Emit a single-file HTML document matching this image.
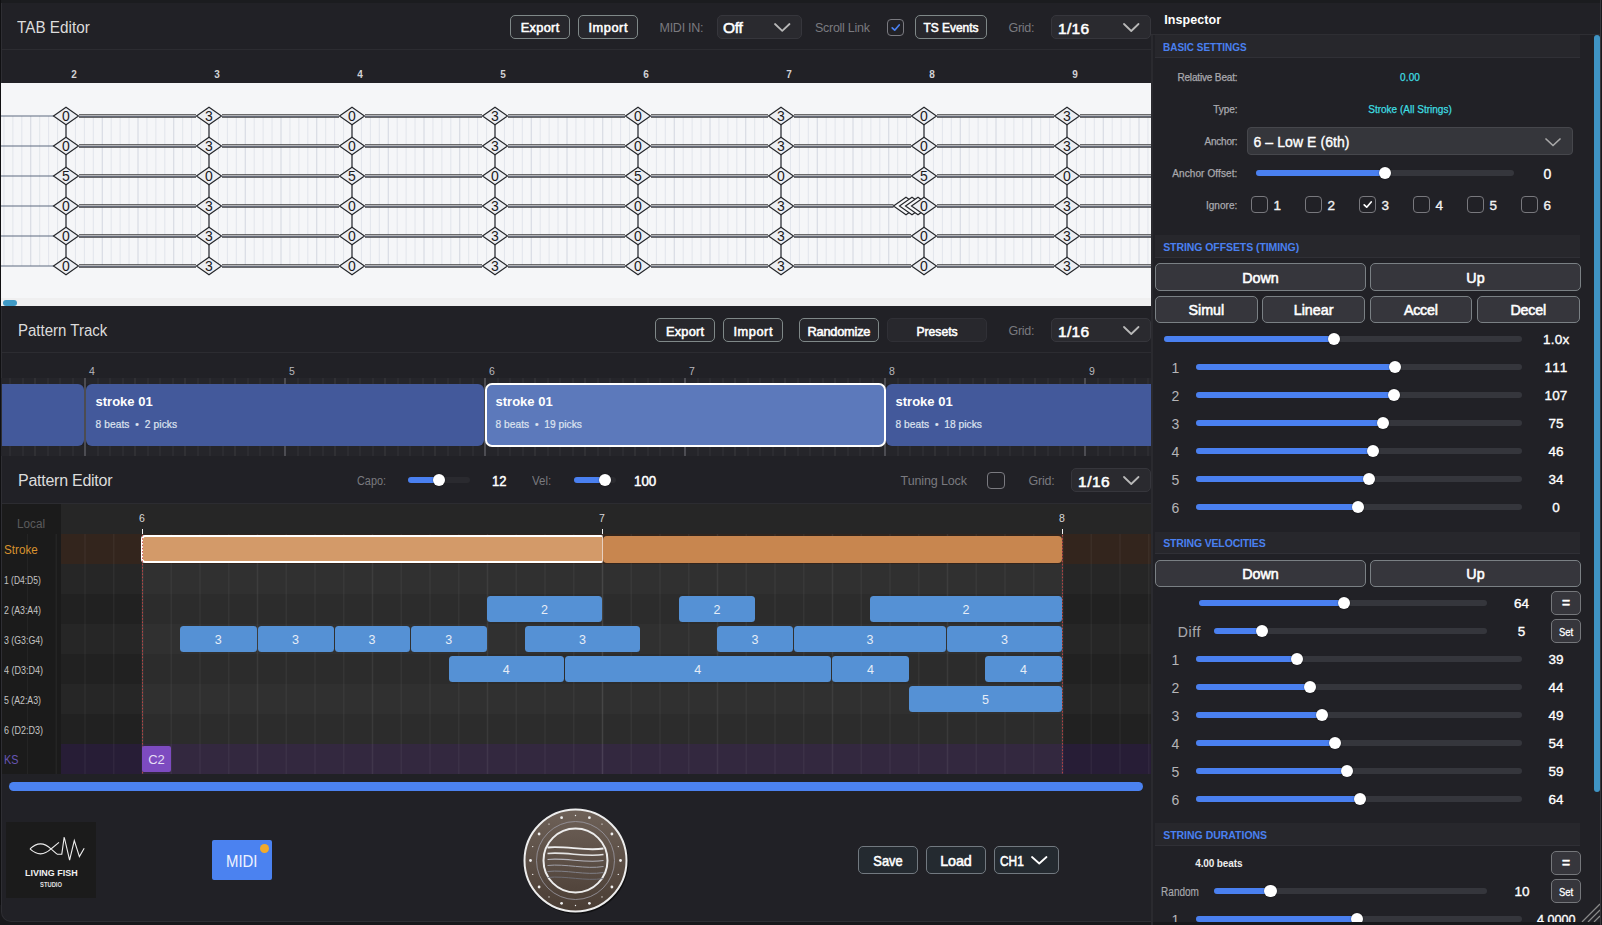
<!DOCTYPE html><html><head><meta charset="utf-8"><style>
html,body{margin:0;padding:0}
body{width:1602px;height:925px;overflow:hidden;position:relative;background:#212126;font-family:"Liberation Sans", sans-serif;}
</style></head><body>
<div style="position:absolute;left:0px;top:0px;width:1602px;height:3px;background:#1b1c1f"></div>
<div style="position:absolute;left:0px;top:0px;width:1px;height:925px;background:#101012"></div>
<div style="position:absolute;left:1px;top:3px;width:1px;height:919px;background:#2e2e33"></div>
<div style="position:absolute;left:17.00px;top:17.60px;height:20px;line-height:20px;font-size:16px;color:#dcdcdc;font-weight:normal;white-space:nowrap;transform:scaleX(0.9546);transform-origin:0.00px 50%;">TAB Editor</div>
<div style="position:absolute;left:510px;top:15px;width:60px;height:24px;box-sizing:border-box;border:1px solid #7f8888;border-radius:5px;background:#27272c"></div>
<div style="position:absolute;left:490.15px;width:100px;text-align:center;top:18.10px;height:20px;line-height:20px;font-size:12.8px;color:#fff;font-weight:normal;white-space:nowrap;-webkit-text-stroke:0.55px #fff;letter-spacing:0.302px;">Export</div>
<div style="position:absolute;left:578px;top:15px;width:60px;height:24px;box-sizing:border-box;border:1px solid #7f8888;border-radius:5px;background:#27272c"></div>
<div style="position:absolute;left:558.27px;width:100px;text-align:center;top:18.10px;height:20px;line-height:20px;font-size:12.8px;color:#fff;font-weight:normal;white-space:nowrap;-webkit-text-stroke:0.55px #fff;letter-spacing:0.542px;">Import</div>
<div style="position:absolute;left:659.50px;top:18.00px;height:20px;line-height:20px;font-size:12.5px;color:#7a7a7f;font-weight:normal;white-space:nowrap;letter-spacing:-0.259px;">MIDI IN:</div>
<div style="position:absolute;left:717px;top:15px;width:85px;height:24px;box-sizing:border-box;border:1px solid #36363c;border-radius:5px;background:#2a2a2f"></div>
<div style="position:absolute;left:723.00px;top:18.40px;height:20px;line-height:20px;font-size:15.5px;color:#fff;font-weight:normal;white-space:nowrap;-webkit-text-stroke:0.55px #fff;letter-spacing:-0.230px;">Off</div>
<svg style="position:absolute;left:772.75px;top:22.0px" width="18.5" height="10.8"><polyline points="2,2 9.25,8.8 16.5,2" fill="none" stroke="#b8b8b8" stroke-width="1.8" stroke-linecap="round" stroke-linejoin="round"/></svg>
<div style="position:absolute;left:815.00px;top:18.00px;height:20px;line-height:20px;font-size:12.5px;color:#7a7a7f;font-weight:normal;white-space:nowrap;letter-spacing:-0.275px;">Scroll Link</div>
<div style="position:absolute;left:886.5px;top:18.5px;width:17.5px;height:17.5px;box-sizing:border-box;border:1.5px solid #7a7a80;border-radius:4px;background:transparent"></div>
<svg style="position:absolute;left:886.5px;top:18.5px" width="17.5" height="17.5"><polyline points="5.2,8.8 7.7,11.2 12.2,6.0" fill="none" stroke="#4a80f0" stroke-width="1.7" stroke-linecap="round" stroke-linejoin="round"/></svg>
<div style="position:absolute;left:915px;top:15px;width:72px;height:24px;box-sizing:border-box;border:1px solid #7f8888;border-radius:5px;background:#27272c"></div>
<div style="position:absolute;left:895.00px;width:112px;text-align:center;top:18.10px;height:20px;line-height:20px;font-size:12.8px;color:#fff;font-weight:normal;white-space:nowrap;-webkit-text-stroke:0.55px #fff;transform:scaleX(0.9311);transform-origin:50% 50%;">TS Events</div>
<div style="position:absolute;left:1008.50px;top:17.80px;height:20px;line-height:20px;font-size:12.5px;color:#7a7a7f;font-weight:normal;white-space:nowrap;letter-spacing:-0.266px;">Grid:</div>
<div style="position:absolute;left:1051px;top:15px;width:100px;height:24px;box-sizing:border-box;border:1px solid #36363c;border-radius:5px;background:#2a2a2f"></div>
<div style="position:absolute;left:1058.00px;top:18.60px;height:20px;line-height:20px;font-size:15.5px;color:#fff;font-weight:normal;white-space:nowrap;-webkit-text-stroke:0.55px #fff;letter-spacing:0.284px;">1/16</div>
<svg style="position:absolute;left:1121.75px;top:22.0px" width="18.5" height="11"><polyline points="2,2 9.25,9 16.5,2" fill="none" stroke="#b8b8b8" stroke-width="1.8" stroke-linecap="round" stroke-linejoin="round"/></svg>
<div style="position:absolute;left:2px;top:49px;width:1149px;height:1px;background:#2c2c31"></div>
<div style="position:absolute;left:64.00px;width:20px;text-align:center;top:65.20px;height:20px;line-height:20px;font-size:10px;color:#d2d2d5;font-weight:bold;white-space:nowrap;">2</div>
<div style="position:absolute;left:207.00px;width:20px;text-align:center;top:65.20px;height:20px;line-height:20px;font-size:10px;color:#d2d2d5;font-weight:bold;white-space:nowrap;">3</div>
<div style="position:absolute;left:350.00px;width:20px;text-align:center;top:65.20px;height:20px;line-height:20px;font-size:10px;color:#d2d2d5;font-weight:bold;white-space:nowrap;">4</div>
<div style="position:absolute;left:493.00px;width:20px;text-align:center;top:65.20px;height:20px;line-height:20px;font-size:10px;color:#d2d2d5;font-weight:bold;white-space:nowrap;">5</div>
<div style="position:absolute;left:636.00px;width:20px;text-align:center;top:65.20px;height:20px;line-height:20px;font-size:10px;color:#d2d2d5;font-weight:bold;white-space:nowrap;">6</div>
<div style="position:absolute;left:779.00px;width:20px;text-align:center;top:65.20px;height:20px;line-height:20px;font-size:10px;color:#d2d2d5;font-weight:bold;white-space:nowrap;">7</div>
<div style="position:absolute;left:922.00px;width:20px;text-align:center;top:65.20px;height:20px;line-height:20px;font-size:10px;color:#d2d2d5;font-weight:bold;white-space:nowrap;">8</div>
<div style="position:absolute;left:1065.00px;width:20px;text-align:center;top:65.20px;height:20px;line-height:20px;font-size:10px;color:#d2d2d5;font-weight:bold;white-space:nowrap;">9</div>
<div style="position:absolute;left:1px;top:83px;width:1150px;height:223px;background:#f5f6f8"></div>
<div style="position:absolute;left:1px;top:297.5px;width:1150px;height:8.5px;background:#efeff0"></div>
<div style="position:absolute;left:3px;top:299.5px;width:14px;height:6px;background:#3f9ac6;border-radius:3px"></div>
<svg style="position:absolute;left:0;top:83px" width="1151" height="222"><line x1="3.94" y1="33" x2="3.94" y2="183" stroke="#e2e5eb" stroke-width="1"/><line x1="12.88" y1="33" x2="12.88" y2="183" stroke="#e2e5eb" stroke-width="1"/><line x1="21.81" y1="33" x2="21.81" y2="183" stroke="#e2e5eb" stroke-width="1"/><line x1="30.75" y1="33" x2="30.75" y2="183" stroke="#d2d6df" stroke-width="1"/><line x1="39.69" y1="33" x2="39.69" y2="183" stroke="#e2e5eb" stroke-width="1"/><line x1="48.62" y1="33" x2="48.62" y2="183" stroke="#e2e5eb" stroke-width="1"/><line x1="57.56" y1="33" x2="57.56" y2="183" stroke="#e2e5eb" stroke-width="1"/><line x1="75.44" y1="33" x2="75.44" y2="183" stroke="#e2e5eb" stroke-width="1"/><line x1="84.38" y1="33" x2="84.38" y2="183" stroke="#e2e5eb" stroke-width="1"/><line x1="93.31" y1="33" x2="93.31" y2="183" stroke="#e2e5eb" stroke-width="1"/><line x1="102.25" y1="33" x2="102.25" y2="183" stroke="#d2d6df" stroke-width="1"/><line x1="111.19" y1="33" x2="111.19" y2="183" stroke="#e2e5eb" stroke-width="1"/><line x1="120.12" y1="33" x2="120.12" y2="183" stroke="#e2e5eb" stroke-width="1"/><line x1="129.06" y1="33" x2="129.06" y2="183" stroke="#e2e5eb" stroke-width="1"/><line x1="138.00" y1="33" x2="138.00" y2="183" stroke="#d2d6df" stroke-width="1"/><line x1="146.94" y1="33" x2="146.94" y2="183" stroke="#e2e5eb" stroke-width="1"/><line x1="155.88" y1="33" x2="155.88" y2="183" stroke="#e2e5eb" stroke-width="1"/><line x1="164.81" y1="33" x2="164.81" y2="183" stroke="#e2e5eb" stroke-width="1"/><line x1="173.75" y1="33" x2="173.75" y2="183" stroke="#d2d6df" stroke-width="1"/><line x1="182.69" y1="33" x2="182.69" y2="183" stroke="#e2e5eb" stroke-width="1"/><line x1="191.62" y1="33" x2="191.62" y2="183" stroke="#e2e5eb" stroke-width="1"/><line x1="200.56" y1="33" x2="200.56" y2="183" stroke="#e2e5eb" stroke-width="1"/><line x1="218.44" y1="33" x2="218.44" y2="183" stroke="#e2e5eb" stroke-width="1"/><line x1="227.38" y1="33" x2="227.38" y2="183" stroke="#e2e5eb" stroke-width="1"/><line x1="236.31" y1="33" x2="236.31" y2="183" stroke="#e2e5eb" stroke-width="1"/><line x1="245.25" y1="33" x2="245.25" y2="183" stroke="#d2d6df" stroke-width="1"/><line x1="254.19" y1="33" x2="254.19" y2="183" stroke="#e2e5eb" stroke-width="1"/><line x1="263.12" y1="33" x2="263.12" y2="183" stroke="#e2e5eb" stroke-width="1"/><line x1="272.06" y1="33" x2="272.06" y2="183" stroke="#e2e5eb" stroke-width="1"/><line x1="281.00" y1="33" x2="281.00" y2="183" stroke="#d2d6df" stroke-width="1"/><line x1="289.94" y1="33" x2="289.94" y2="183" stroke="#e2e5eb" stroke-width="1"/><line x1="298.88" y1="33" x2="298.88" y2="183" stroke="#e2e5eb" stroke-width="1"/><line x1="307.81" y1="33" x2="307.81" y2="183" stroke="#e2e5eb" stroke-width="1"/><line x1="316.75" y1="33" x2="316.75" y2="183" stroke="#d2d6df" stroke-width="1"/><line x1="325.69" y1="33" x2="325.69" y2="183" stroke="#e2e5eb" stroke-width="1"/><line x1="334.62" y1="33" x2="334.62" y2="183" stroke="#e2e5eb" stroke-width="1"/><line x1="343.56" y1="33" x2="343.56" y2="183" stroke="#e2e5eb" stroke-width="1"/><line x1="361.44" y1="33" x2="361.44" y2="183" stroke="#e2e5eb" stroke-width="1"/><line x1="370.38" y1="33" x2="370.38" y2="183" stroke="#e2e5eb" stroke-width="1"/><line x1="379.31" y1="33" x2="379.31" y2="183" stroke="#e2e5eb" stroke-width="1"/><line x1="388.25" y1="33" x2="388.25" y2="183" stroke="#d2d6df" stroke-width="1"/><line x1="397.19" y1="33" x2="397.19" y2="183" stroke="#e2e5eb" stroke-width="1"/><line x1="406.12" y1="33" x2="406.12" y2="183" stroke="#e2e5eb" stroke-width="1"/><line x1="415.06" y1="33" x2="415.06" y2="183" stroke="#e2e5eb" stroke-width="1"/><line x1="424.00" y1="33" x2="424.00" y2="183" stroke="#d2d6df" stroke-width="1"/><line x1="432.94" y1="33" x2="432.94" y2="183" stroke="#e2e5eb" stroke-width="1"/><line x1="441.88" y1="33" x2="441.88" y2="183" stroke="#e2e5eb" stroke-width="1"/><line x1="450.81" y1="33" x2="450.81" y2="183" stroke="#e2e5eb" stroke-width="1"/><line x1="459.75" y1="33" x2="459.75" y2="183" stroke="#d2d6df" stroke-width="1"/><line x1="468.69" y1="33" x2="468.69" y2="183" stroke="#e2e5eb" stroke-width="1"/><line x1="477.62" y1="33" x2="477.62" y2="183" stroke="#e2e5eb" stroke-width="1"/><line x1="486.56" y1="33" x2="486.56" y2="183" stroke="#e2e5eb" stroke-width="1"/><line x1="504.44" y1="33" x2="504.44" y2="183" stroke="#e2e5eb" stroke-width="1"/><line x1="513.38" y1="33" x2="513.38" y2="183" stroke="#e2e5eb" stroke-width="1"/><line x1="522.31" y1="33" x2="522.31" y2="183" stroke="#e2e5eb" stroke-width="1"/><line x1="531.25" y1="33" x2="531.25" y2="183" stroke="#d2d6df" stroke-width="1"/><line x1="540.19" y1="33" x2="540.19" y2="183" stroke="#e2e5eb" stroke-width="1"/><line x1="549.12" y1="33" x2="549.12" y2="183" stroke="#e2e5eb" stroke-width="1"/><line x1="558.06" y1="33" x2="558.06" y2="183" stroke="#e2e5eb" stroke-width="1"/><line x1="567.00" y1="33" x2="567.00" y2="183" stroke="#d2d6df" stroke-width="1"/><line x1="575.94" y1="33" x2="575.94" y2="183" stroke="#e2e5eb" stroke-width="1"/><line x1="584.88" y1="33" x2="584.88" y2="183" stroke="#e2e5eb" stroke-width="1"/><line x1="593.81" y1="33" x2="593.81" y2="183" stroke="#e2e5eb" stroke-width="1"/><line x1="602.75" y1="33" x2="602.75" y2="183" stroke="#d2d6df" stroke-width="1"/><line x1="611.69" y1="33" x2="611.69" y2="183" stroke="#e2e5eb" stroke-width="1"/><line x1="620.62" y1="33" x2="620.62" y2="183" stroke="#e2e5eb" stroke-width="1"/><line x1="629.56" y1="33" x2="629.56" y2="183" stroke="#e2e5eb" stroke-width="1"/><line x1="647.44" y1="33" x2="647.44" y2="183" stroke="#e2e5eb" stroke-width="1"/><line x1="656.38" y1="33" x2="656.38" y2="183" stroke="#e2e5eb" stroke-width="1"/><line x1="665.31" y1="33" x2="665.31" y2="183" stroke="#e2e5eb" stroke-width="1"/><line x1="674.25" y1="33" x2="674.25" y2="183" stroke="#d2d6df" stroke-width="1"/><line x1="683.19" y1="33" x2="683.19" y2="183" stroke="#e2e5eb" stroke-width="1"/><line x1="692.12" y1="33" x2="692.12" y2="183" stroke="#e2e5eb" stroke-width="1"/><line x1="701.06" y1="33" x2="701.06" y2="183" stroke="#e2e5eb" stroke-width="1"/><line x1="710.00" y1="33" x2="710.00" y2="183" stroke="#d2d6df" stroke-width="1"/><line x1="718.94" y1="33" x2="718.94" y2="183" stroke="#e2e5eb" stroke-width="1"/><line x1="727.88" y1="33" x2="727.88" y2="183" stroke="#e2e5eb" stroke-width="1"/><line x1="736.81" y1="33" x2="736.81" y2="183" stroke="#e2e5eb" stroke-width="1"/><line x1="745.75" y1="33" x2="745.75" y2="183" stroke="#d2d6df" stroke-width="1"/><line x1="754.69" y1="33" x2="754.69" y2="183" stroke="#e2e5eb" stroke-width="1"/><line x1="763.62" y1="33" x2="763.62" y2="183" stroke="#e2e5eb" stroke-width="1"/><line x1="772.56" y1="33" x2="772.56" y2="183" stroke="#e2e5eb" stroke-width="1"/><line x1="790.44" y1="33" x2="790.44" y2="183" stroke="#e2e5eb" stroke-width="1"/><line x1="799.38" y1="33" x2="799.38" y2="183" stroke="#e2e5eb" stroke-width="1"/><line x1="808.31" y1="33" x2="808.31" y2="183" stroke="#e2e5eb" stroke-width="1"/><line x1="817.25" y1="33" x2="817.25" y2="183" stroke="#d2d6df" stroke-width="1"/><line x1="826.19" y1="33" x2="826.19" y2="183" stroke="#e2e5eb" stroke-width="1"/><line x1="835.12" y1="33" x2="835.12" y2="183" stroke="#e2e5eb" stroke-width="1"/><line x1="844.06" y1="33" x2="844.06" y2="183" stroke="#e2e5eb" stroke-width="1"/><line x1="853.00" y1="33" x2="853.00" y2="183" stroke="#d2d6df" stroke-width="1"/><line x1="861.94" y1="33" x2="861.94" y2="183" stroke="#e2e5eb" stroke-width="1"/><line x1="870.88" y1="33" x2="870.88" y2="183" stroke="#e2e5eb" stroke-width="1"/><line x1="879.81" y1="33" x2="879.81" y2="183" stroke="#e2e5eb" stroke-width="1"/><line x1="888.75" y1="33" x2="888.75" y2="183" stroke="#d2d6df" stroke-width="1"/><line x1="897.69" y1="33" x2="897.69" y2="183" stroke="#e2e5eb" stroke-width="1"/><line x1="906.62" y1="33" x2="906.62" y2="183" stroke="#e2e5eb" stroke-width="1"/><line x1="915.56" y1="33" x2="915.56" y2="183" stroke="#e2e5eb" stroke-width="1"/><line x1="933.44" y1="33" x2="933.44" y2="183" stroke="#e2e5eb" stroke-width="1"/><line x1="942.38" y1="33" x2="942.38" y2="183" stroke="#e2e5eb" stroke-width="1"/><line x1="951.31" y1="33" x2="951.31" y2="183" stroke="#e2e5eb" stroke-width="1"/><line x1="960.25" y1="33" x2="960.25" y2="183" stroke="#d2d6df" stroke-width="1"/><line x1="969.19" y1="33" x2="969.19" y2="183" stroke="#e2e5eb" stroke-width="1"/><line x1="978.12" y1="33" x2="978.12" y2="183" stroke="#e2e5eb" stroke-width="1"/><line x1="987.06" y1="33" x2="987.06" y2="183" stroke="#e2e5eb" stroke-width="1"/><line x1="996.00" y1="33" x2="996.00" y2="183" stroke="#d2d6df" stroke-width="1"/><line x1="1004.94" y1="33" x2="1004.94" y2="183" stroke="#e2e5eb" stroke-width="1"/><line x1="1013.88" y1="33" x2="1013.88" y2="183" stroke="#e2e5eb" stroke-width="1"/><line x1="1022.81" y1="33" x2="1022.81" y2="183" stroke="#e2e5eb" stroke-width="1"/><line x1="1031.75" y1="33" x2="1031.75" y2="183" stroke="#d2d6df" stroke-width="1"/><line x1="1040.69" y1="33" x2="1040.69" y2="183" stroke="#e2e5eb" stroke-width="1"/><line x1="1049.62" y1="33" x2="1049.62" y2="183" stroke="#e2e5eb" stroke-width="1"/><line x1="1058.56" y1="33" x2="1058.56" y2="183" stroke="#e2e5eb" stroke-width="1"/><line x1="1076.44" y1="33" x2="1076.44" y2="183" stroke="#e2e5eb" stroke-width="1"/><line x1="1085.38" y1="33" x2="1085.38" y2="183" stroke="#e2e5eb" stroke-width="1"/><line x1="1094.31" y1="33" x2="1094.31" y2="183" stroke="#e2e5eb" stroke-width="1"/><line x1="1103.25" y1="33" x2="1103.25" y2="183" stroke="#d2d6df" stroke-width="1"/><line x1="1112.19" y1="33" x2="1112.19" y2="183" stroke="#e2e5eb" stroke-width="1"/><line x1="1121.12" y1="33" x2="1121.12" y2="183" stroke="#e2e5eb" stroke-width="1"/><line x1="1130.06" y1="33" x2="1130.06" y2="183" stroke="#e2e5eb" stroke-width="1"/><line x1="1139.00" y1="33" x2="1139.00" y2="183" stroke="#d2d6df" stroke-width="1"/><line x1="1147.94" y1="33" x2="1147.94" y2="183" stroke="#e2e5eb" stroke-width="1"/><line x1="1" y1="33" x2="54" y2="33" stroke="#5e6a80" stroke-width="1.1"/><line x1="79" y1="33" x2="196" y2="33" stroke="#3c3c3e" stroke-width="3.6"/><line x1="79" y1="32.5" x2="196" y2="32.5" stroke="#c6c7ca" stroke-width="0.9"/><line x1="79" y1="33.45" x2="196" y2="33.45" stroke="#6c7382" stroke-width="0.9"/><line x1="222" y1="33" x2="339" y2="33" stroke="#3c3c3e" stroke-width="3.6"/><line x1="222" y1="32.5" x2="339" y2="32.5" stroke="#c6c7ca" stroke-width="0.9"/><line x1="222" y1="33.45" x2="339" y2="33.45" stroke="#6c7382" stroke-width="0.9"/><line x1="365" y1="33" x2="482" y2="33" stroke="#3c3c3e" stroke-width="3.6"/><line x1="365" y1="32.5" x2="482" y2="32.5" stroke="#c6c7ca" stroke-width="0.9"/><line x1="365" y1="33.45" x2="482" y2="33.45" stroke="#6c7382" stroke-width="0.9"/><line x1="508" y1="33" x2="625" y2="33" stroke="#3c3c3e" stroke-width="3.6"/><line x1="508" y1="32.5" x2="625" y2="32.5" stroke="#c6c7ca" stroke-width="0.9"/><line x1="508" y1="33.45" x2="625" y2="33.45" stroke="#6c7382" stroke-width="0.9"/><line x1="651" y1="33" x2="768" y2="33" stroke="#3c3c3e" stroke-width="3.6"/><line x1="651" y1="32.5" x2="768" y2="32.5" stroke="#c6c7ca" stroke-width="0.9"/><line x1="651" y1="33.45" x2="768" y2="33.45" stroke="#6c7382" stroke-width="0.9"/><line x1="794" y1="33" x2="911" y2="33" stroke="#3c3c3e" stroke-width="3.6"/><line x1="794" y1="32.5" x2="911" y2="32.5" stroke="#c6c7ca" stroke-width="0.9"/><line x1="794" y1="33.45" x2="911" y2="33.45" stroke="#6c7382" stroke-width="0.9"/><line x1="937" y1="33" x2="1054" y2="33" stroke="#3c3c3e" stroke-width="3.6"/><line x1="937" y1="32.5" x2="1054" y2="32.5" stroke="#c6c7ca" stroke-width="0.9"/><line x1="937" y1="33.45" x2="1054" y2="33.45" stroke="#6c7382" stroke-width="0.9"/><line x1="1080" y1="33" x2="1151" y2="33" stroke="#3c3c3e" stroke-width="3.6"/><line x1="1080" y1="32.5" x2="1151" y2="32.5" stroke="#c6c7ca" stroke-width="0.9"/><line x1="1080" y1="33.45" x2="1151" y2="33.45" stroke="#6c7382" stroke-width="0.9"/><line x1="1" y1="63" x2="54" y2="63" stroke="#5e6a80" stroke-width="1.1"/><line x1="79" y1="63" x2="196" y2="63" stroke="#3c3c3e" stroke-width="3.6"/><line x1="79" y1="62.5" x2="196" y2="62.5" stroke="#c6c7ca" stroke-width="0.9"/><line x1="79" y1="63.45" x2="196" y2="63.45" stroke="#6c7382" stroke-width="0.9"/><line x1="222" y1="63" x2="339" y2="63" stroke="#3c3c3e" stroke-width="3.6"/><line x1="222" y1="62.5" x2="339" y2="62.5" stroke="#c6c7ca" stroke-width="0.9"/><line x1="222" y1="63.45" x2="339" y2="63.45" stroke="#6c7382" stroke-width="0.9"/><line x1="365" y1="63" x2="482" y2="63" stroke="#3c3c3e" stroke-width="3.6"/><line x1="365" y1="62.5" x2="482" y2="62.5" stroke="#c6c7ca" stroke-width="0.9"/><line x1="365" y1="63.45" x2="482" y2="63.45" stroke="#6c7382" stroke-width="0.9"/><line x1="508" y1="63" x2="625" y2="63" stroke="#3c3c3e" stroke-width="3.6"/><line x1="508" y1="62.5" x2="625" y2="62.5" stroke="#c6c7ca" stroke-width="0.9"/><line x1="508" y1="63.45" x2="625" y2="63.45" stroke="#6c7382" stroke-width="0.9"/><line x1="651" y1="63" x2="768" y2="63" stroke="#3c3c3e" stroke-width="3.6"/><line x1="651" y1="62.5" x2="768" y2="62.5" stroke="#c6c7ca" stroke-width="0.9"/><line x1="651" y1="63.45" x2="768" y2="63.45" stroke="#6c7382" stroke-width="0.9"/><line x1="794" y1="63" x2="911" y2="63" stroke="#3c3c3e" stroke-width="3.6"/><line x1="794" y1="62.5" x2="911" y2="62.5" stroke="#c6c7ca" stroke-width="0.9"/><line x1="794" y1="63.45" x2="911" y2="63.45" stroke="#6c7382" stroke-width="0.9"/><line x1="937" y1="63" x2="1054" y2="63" stroke="#3c3c3e" stroke-width="3.6"/><line x1="937" y1="62.5" x2="1054" y2="62.5" stroke="#c6c7ca" stroke-width="0.9"/><line x1="937" y1="63.45" x2="1054" y2="63.45" stroke="#6c7382" stroke-width="0.9"/><line x1="1080" y1="63" x2="1151" y2="63" stroke="#3c3c3e" stroke-width="3.6"/><line x1="1080" y1="62.5" x2="1151" y2="62.5" stroke="#c6c7ca" stroke-width="0.9"/><line x1="1080" y1="63.45" x2="1151" y2="63.45" stroke="#6c7382" stroke-width="0.9"/><line x1="1" y1="93" x2="54" y2="93" stroke="#5e6a80" stroke-width="1.1"/><line x1="79" y1="93" x2="196" y2="93" stroke="#3c3c3e" stroke-width="3.6"/><line x1="79" y1="92.5" x2="196" y2="92.5" stroke="#c6c7ca" stroke-width="0.9"/><line x1="79" y1="93.45" x2="196" y2="93.45" stroke="#6c7382" stroke-width="0.9"/><line x1="222" y1="93" x2="339" y2="93" stroke="#3c3c3e" stroke-width="3.6"/><line x1="222" y1="92.5" x2="339" y2="92.5" stroke="#c6c7ca" stroke-width="0.9"/><line x1="222" y1="93.45" x2="339" y2="93.45" stroke="#6c7382" stroke-width="0.9"/><line x1="365" y1="93" x2="482" y2="93" stroke="#3c3c3e" stroke-width="3.6"/><line x1="365" y1="92.5" x2="482" y2="92.5" stroke="#c6c7ca" stroke-width="0.9"/><line x1="365" y1="93.45" x2="482" y2="93.45" stroke="#6c7382" stroke-width="0.9"/><line x1="508" y1="93" x2="625" y2="93" stroke="#3c3c3e" stroke-width="3.6"/><line x1="508" y1="92.5" x2="625" y2="92.5" stroke="#c6c7ca" stroke-width="0.9"/><line x1="508" y1="93.45" x2="625" y2="93.45" stroke="#6c7382" stroke-width="0.9"/><line x1="651" y1="93" x2="768" y2="93" stroke="#3c3c3e" stroke-width="3.6"/><line x1="651" y1="92.5" x2="768" y2="92.5" stroke="#c6c7ca" stroke-width="0.9"/><line x1="651" y1="93.45" x2="768" y2="93.45" stroke="#6c7382" stroke-width="0.9"/><line x1="794" y1="93" x2="911" y2="93" stroke="#3c3c3e" stroke-width="3.6"/><line x1="794" y1="92.5" x2="911" y2="92.5" stroke="#c6c7ca" stroke-width="0.9"/><line x1="794" y1="93.45" x2="911" y2="93.45" stroke="#6c7382" stroke-width="0.9"/><line x1="937" y1="93" x2="1054" y2="93" stroke="#3c3c3e" stroke-width="3.6"/><line x1="937" y1="92.5" x2="1054" y2="92.5" stroke="#c6c7ca" stroke-width="0.9"/><line x1="937" y1="93.45" x2="1054" y2="93.45" stroke="#6c7382" stroke-width="0.9"/><line x1="1080" y1="93" x2="1151" y2="93" stroke="#3c3c3e" stroke-width="3.6"/><line x1="1080" y1="92.5" x2="1151" y2="92.5" stroke="#c6c7ca" stroke-width="0.9"/><line x1="1080" y1="93.45" x2="1151" y2="93.45" stroke="#6c7382" stroke-width="0.9"/><line x1="1" y1="123" x2="54" y2="123" stroke="#5e6a80" stroke-width="1.1"/><line x1="79" y1="123" x2="196" y2="123" stroke="#3c3c3e" stroke-width="3.6"/><line x1="79" y1="122.5" x2="196" y2="122.5" stroke="#c6c7ca" stroke-width="0.9"/><line x1="79" y1="123.45" x2="196" y2="123.45" stroke="#6c7382" stroke-width="0.9"/><line x1="222" y1="123" x2="339" y2="123" stroke="#3c3c3e" stroke-width="3.6"/><line x1="222" y1="122.5" x2="339" y2="122.5" stroke="#c6c7ca" stroke-width="0.9"/><line x1="222" y1="123.45" x2="339" y2="123.45" stroke="#6c7382" stroke-width="0.9"/><line x1="365" y1="123" x2="482" y2="123" stroke="#3c3c3e" stroke-width="3.6"/><line x1="365" y1="122.5" x2="482" y2="122.5" stroke="#c6c7ca" stroke-width="0.9"/><line x1="365" y1="123.45" x2="482" y2="123.45" stroke="#6c7382" stroke-width="0.9"/><line x1="508" y1="123" x2="625" y2="123" stroke="#3c3c3e" stroke-width="3.6"/><line x1="508" y1="122.5" x2="625" y2="122.5" stroke="#c6c7ca" stroke-width="0.9"/><line x1="508" y1="123.45" x2="625" y2="123.45" stroke="#6c7382" stroke-width="0.9"/><line x1="651" y1="123" x2="768" y2="123" stroke="#3c3c3e" stroke-width="3.6"/><line x1="651" y1="122.5" x2="768" y2="122.5" stroke="#c6c7ca" stroke-width="0.9"/><line x1="651" y1="123.45" x2="768" y2="123.45" stroke="#6c7382" stroke-width="0.9"/><line x1="794" y1="123" x2="893.5" y2="123" stroke="#3c3c3e" stroke-width="3.6"/><line x1="794" y1="122.5" x2="893.5" y2="122.5" stroke="#c6c7ca" stroke-width="0.9"/><line x1="794" y1="123.45" x2="893.5" y2="123.45" stroke="#6c7382" stroke-width="0.9"/><line x1="937" y1="123" x2="1054" y2="123" stroke="#3c3c3e" stroke-width="3.6"/><line x1="937" y1="122.5" x2="1054" y2="122.5" stroke="#c6c7ca" stroke-width="0.9"/><line x1="937" y1="123.45" x2="1054" y2="123.45" stroke="#6c7382" stroke-width="0.9"/><line x1="1080" y1="123" x2="1151" y2="123" stroke="#3c3c3e" stroke-width="3.6"/><line x1="1080" y1="122.5" x2="1151" y2="122.5" stroke="#c6c7ca" stroke-width="0.9"/><line x1="1080" y1="123.45" x2="1151" y2="123.45" stroke="#6c7382" stroke-width="0.9"/><line x1="1" y1="153" x2="54" y2="153" stroke="#5e6a80" stroke-width="1.1"/><line x1="79" y1="153" x2="196" y2="153" stroke="#3c3c3e" stroke-width="3.6"/><line x1="79" y1="152.5" x2="196" y2="152.5" stroke="#c6c7ca" stroke-width="0.9"/><line x1="79" y1="153.45" x2="196" y2="153.45" stroke="#6c7382" stroke-width="0.9"/><line x1="222" y1="153" x2="339" y2="153" stroke="#3c3c3e" stroke-width="3.6"/><line x1="222" y1="152.5" x2="339" y2="152.5" stroke="#c6c7ca" stroke-width="0.9"/><line x1="222" y1="153.45" x2="339" y2="153.45" stroke="#6c7382" stroke-width="0.9"/><line x1="365" y1="153" x2="482" y2="153" stroke="#3c3c3e" stroke-width="3.6"/><line x1="365" y1="152.5" x2="482" y2="152.5" stroke="#c6c7ca" stroke-width="0.9"/><line x1="365" y1="153.45" x2="482" y2="153.45" stroke="#6c7382" stroke-width="0.9"/><line x1="508" y1="153" x2="625" y2="153" stroke="#3c3c3e" stroke-width="3.6"/><line x1="508" y1="152.5" x2="625" y2="152.5" stroke="#c6c7ca" stroke-width="0.9"/><line x1="508" y1="153.45" x2="625" y2="153.45" stroke="#6c7382" stroke-width="0.9"/><line x1="651" y1="153" x2="768" y2="153" stroke="#3c3c3e" stroke-width="3.6"/><line x1="651" y1="152.5" x2="768" y2="152.5" stroke="#c6c7ca" stroke-width="0.9"/><line x1="651" y1="153.45" x2="768" y2="153.45" stroke="#6c7382" stroke-width="0.9"/><line x1="794" y1="153" x2="911" y2="153" stroke="#3c3c3e" stroke-width="3.6"/><line x1="794" y1="152.5" x2="911" y2="152.5" stroke="#c6c7ca" stroke-width="0.9"/><line x1="794" y1="153.45" x2="911" y2="153.45" stroke="#6c7382" stroke-width="0.9"/><line x1="937" y1="153" x2="1054" y2="153" stroke="#3c3c3e" stroke-width="3.6"/><line x1="937" y1="152.5" x2="1054" y2="152.5" stroke="#c6c7ca" stroke-width="0.9"/><line x1="937" y1="153.45" x2="1054" y2="153.45" stroke="#6c7382" stroke-width="0.9"/><line x1="1080" y1="153" x2="1151" y2="153" stroke="#3c3c3e" stroke-width="3.6"/><line x1="1080" y1="152.5" x2="1151" y2="152.5" stroke="#c6c7ca" stroke-width="0.9"/><line x1="1080" y1="153.45" x2="1151" y2="153.45" stroke="#6c7382" stroke-width="0.9"/><line x1="1" y1="183" x2="54" y2="183" stroke="#5e6a80" stroke-width="1.1"/><line x1="79" y1="183" x2="196" y2="183" stroke="#3c3c3e" stroke-width="3.6"/><line x1="79" y1="182.5" x2="196" y2="182.5" stroke="#c6c7ca" stroke-width="0.9"/><line x1="79" y1="183.45" x2="196" y2="183.45" stroke="#6c7382" stroke-width="0.9"/><line x1="222" y1="183" x2="339" y2="183" stroke="#3c3c3e" stroke-width="3.6"/><line x1="222" y1="182.5" x2="339" y2="182.5" stroke="#c6c7ca" stroke-width="0.9"/><line x1="222" y1="183.45" x2="339" y2="183.45" stroke="#6c7382" stroke-width="0.9"/><line x1="365" y1="183" x2="482" y2="183" stroke="#3c3c3e" stroke-width="3.6"/><line x1="365" y1="182.5" x2="482" y2="182.5" stroke="#c6c7ca" stroke-width="0.9"/><line x1="365" y1="183.45" x2="482" y2="183.45" stroke="#6c7382" stroke-width="0.9"/><line x1="508" y1="183" x2="625" y2="183" stroke="#3c3c3e" stroke-width="3.6"/><line x1="508" y1="182.5" x2="625" y2="182.5" stroke="#c6c7ca" stroke-width="0.9"/><line x1="508" y1="183.45" x2="625" y2="183.45" stroke="#6c7382" stroke-width="0.9"/><line x1="651" y1="183" x2="768" y2="183" stroke="#3c3c3e" stroke-width="3.6"/><line x1="651" y1="182.5" x2="768" y2="182.5" stroke="#c6c7ca" stroke-width="0.9"/><line x1="651" y1="183.45" x2="768" y2="183.45" stroke="#6c7382" stroke-width="0.9"/><line x1="794" y1="183" x2="911" y2="183" stroke="#3c3c3e" stroke-width="3.6"/><line x1="794" y1="182.5" x2="911" y2="182.5" stroke="#c6c7ca" stroke-width="0.9"/><line x1="794" y1="183.45" x2="911" y2="183.45" stroke="#6c7382" stroke-width="0.9"/><line x1="937" y1="183" x2="1054" y2="183" stroke="#3c3c3e" stroke-width="3.6"/><line x1="937" y1="182.5" x2="1054" y2="182.5" stroke="#c6c7ca" stroke-width="0.9"/><line x1="937" y1="183.45" x2="1054" y2="183.45" stroke="#6c7382" stroke-width="0.9"/><line x1="1080" y1="183" x2="1151" y2="183" stroke="#3c3c3e" stroke-width="3.6"/><line x1="1080" y1="182.5" x2="1151" y2="182.5" stroke="#c6c7ca" stroke-width="0.9"/><line x1="1080" y1="183.45" x2="1151" y2="183.45" stroke="#6c7382" stroke-width="0.9"/><line x1="66" y1="33" x2="66" y2="183" stroke="#2d3036" stroke-width="1.3"/><line x1="209" y1="33" x2="209" y2="183" stroke="#2d3036" stroke-width="1.3"/><line x1="352" y1="33" x2="352" y2="183" stroke="#2d3036" stroke-width="1.3"/><line x1="495" y1="33" x2="495" y2="183" stroke="#2d3036" stroke-width="1.3"/><line x1="638" y1="33" x2="638" y2="183" stroke="#2d3036" stroke-width="1.3"/><line x1="781" y1="33" x2="781" y2="183" stroke="#2d3036" stroke-width="1.3"/><line x1="924" y1="33" x2="924" y2="183" stroke="#2d3036" stroke-width="1.3"/><line x1="1067" y1="33" x2="1067" y2="183" stroke="#2d3036" stroke-width="1.3"/><path d="M53.5,33 L66,24.2 L78.5,33 L66,41.8 Z" fill="#eceef2" stroke="#24262a" stroke-width="1.15"/><text x="66" y="38.2" font-family="Liberation Sans" font-size="14" text-anchor="middle" fill="#1a1a1c">0</text><path d="M196.5,33 L209,24.2 L221.5,33 L209,41.8 Z" fill="#eceef2" stroke="#24262a" stroke-width="1.15"/><text x="209" y="38.2" font-family="Liberation Sans" font-size="14" text-anchor="middle" fill="#1a1a1c">3</text><path d="M339.5,33 L352,24.2 L364.5,33 L352,41.8 Z" fill="#eceef2" stroke="#24262a" stroke-width="1.15"/><text x="352" y="38.2" font-family="Liberation Sans" font-size="14" text-anchor="middle" fill="#1a1a1c">0</text><path d="M482.5,33 L495,24.2 L507.5,33 L495,41.8 Z" fill="#eceef2" stroke="#24262a" stroke-width="1.15"/><text x="495" y="38.2" font-family="Liberation Sans" font-size="14" text-anchor="middle" fill="#1a1a1c">3</text><path d="M625.5,33 L638,24.2 L650.5,33 L638,41.8 Z" fill="#eceef2" stroke="#24262a" stroke-width="1.15"/><text x="638" y="38.2" font-family="Liberation Sans" font-size="14" text-anchor="middle" fill="#1a1a1c">0</text><path d="M768.5,33 L781,24.2 L793.5,33 L781,41.8 Z" fill="#eceef2" stroke="#24262a" stroke-width="1.15"/><text x="781" y="38.2" font-family="Liberation Sans" font-size="14" text-anchor="middle" fill="#1a1a1c">3</text><path d="M911.5,33 L924,24.2 L936.5,33 L924,41.8 Z" fill="#eceef2" stroke="#24262a" stroke-width="1.15"/><text x="924" y="38.2" font-family="Liberation Sans" font-size="14" text-anchor="middle" fill="#1a1a1c">0</text><path d="M1054.5,33 L1067,24.2 L1079.5,33 L1067,41.8 Z" fill="#eceef2" stroke="#24262a" stroke-width="1.15"/><text x="1067" y="38.2" font-family="Liberation Sans" font-size="14" text-anchor="middle" fill="#1a1a1c">3</text><path d="M53.5,63 L66,54.2 L78.5,63 L66,71.8 Z" fill="#eceef2" stroke="#24262a" stroke-width="1.15"/><text x="66" y="68.2" font-family="Liberation Sans" font-size="14" text-anchor="middle" fill="#1a1a1c">0</text><path d="M196.5,63 L209,54.2 L221.5,63 L209,71.8 Z" fill="#eceef2" stroke="#24262a" stroke-width="1.15"/><text x="209" y="68.2" font-family="Liberation Sans" font-size="14" text-anchor="middle" fill="#1a1a1c">3</text><path d="M339.5,63 L352,54.2 L364.5,63 L352,71.8 Z" fill="#eceef2" stroke="#24262a" stroke-width="1.15"/><text x="352" y="68.2" font-family="Liberation Sans" font-size="14" text-anchor="middle" fill="#1a1a1c">0</text><path d="M482.5,63 L495,54.2 L507.5,63 L495,71.8 Z" fill="#eceef2" stroke="#24262a" stroke-width="1.15"/><text x="495" y="68.2" font-family="Liberation Sans" font-size="14" text-anchor="middle" fill="#1a1a1c">3</text><path d="M625.5,63 L638,54.2 L650.5,63 L638,71.8 Z" fill="#eceef2" stroke="#24262a" stroke-width="1.15"/><text x="638" y="68.2" font-family="Liberation Sans" font-size="14" text-anchor="middle" fill="#1a1a1c">0</text><path d="M768.5,63 L781,54.2 L793.5,63 L781,71.8 Z" fill="#eceef2" stroke="#24262a" stroke-width="1.15"/><text x="781" y="68.2" font-family="Liberation Sans" font-size="14" text-anchor="middle" fill="#1a1a1c">3</text><path d="M911.5,63 L924,54.2 L936.5,63 L924,71.8 Z" fill="#eceef2" stroke="#24262a" stroke-width="1.15"/><text x="924" y="68.2" font-family="Liberation Sans" font-size="14" text-anchor="middle" fill="#1a1a1c">0</text><path d="M1054.5,63 L1067,54.2 L1079.5,63 L1067,71.8 Z" fill="#eceef2" stroke="#24262a" stroke-width="1.15"/><text x="1067" y="68.2" font-family="Liberation Sans" font-size="14" text-anchor="middle" fill="#1a1a1c">3</text><path d="M53.5,93 L66,84.2 L78.5,93 L66,101.8 Z" fill="#eceef2" stroke="#24262a" stroke-width="1.15"/><text x="66" y="98.2" font-family="Liberation Sans" font-size="14" text-anchor="middle" fill="#1a1a1c">5</text><path d="M196.5,93 L209,84.2 L221.5,93 L209,101.8 Z" fill="#eceef2" stroke="#24262a" stroke-width="1.15"/><text x="209" y="98.2" font-family="Liberation Sans" font-size="14" text-anchor="middle" fill="#1a1a1c">0</text><path d="M339.5,93 L352,84.2 L364.5,93 L352,101.8 Z" fill="#eceef2" stroke="#24262a" stroke-width="1.15"/><text x="352" y="98.2" font-family="Liberation Sans" font-size="14" text-anchor="middle" fill="#1a1a1c">5</text><path d="M482.5,93 L495,84.2 L507.5,93 L495,101.8 Z" fill="#eceef2" stroke="#24262a" stroke-width="1.15"/><text x="495" y="98.2" font-family="Liberation Sans" font-size="14" text-anchor="middle" fill="#1a1a1c">0</text><path d="M625.5,93 L638,84.2 L650.5,93 L638,101.8 Z" fill="#eceef2" stroke="#24262a" stroke-width="1.15"/><text x="638" y="98.2" font-family="Liberation Sans" font-size="14" text-anchor="middle" fill="#1a1a1c">5</text><path d="M768.5,93 L781,84.2 L793.5,93 L781,101.8 Z" fill="#eceef2" stroke="#24262a" stroke-width="1.15"/><text x="781" y="98.2" font-family="Liberation Sans" font-size="14" text-anchor="middle" fill="#1a1a1c">0</text><path d="M911.5,93 L924,84.2 L936.5,93 L924,101.8 Z" fill="#eceef2" stroke="#24262a" stroke-width="1.15"/><text x="924" y="98.2" font-family="Liberation Sans" font-size="14" text-anchor="middle" fill="#1a1a1c">5</text><path d="M1054.5,93 L1067,84.2 L1079.5,93 L1067,101.8 Z" fill="#eceef2" stroke="#24262a" stroke-width="1.15"/><text x="1067" y="98.2" font-family="Liberation Sans" font-size="14" text-anchor="middle" fill="#1a1a1c">0</text><path d="M53.5,123 L66,114.2 L78.5,123 L66,131.8 Z" fill="#eceef2" stroke="#24262a" stroke-width="1.15"/><text x="66" y="128.2" font-family="Liberation Sans" font-size="14" text-anchor="middle" fill="#1a1a1c">0</text><path d="M196.5,123 L209,114.2 L221.5,123 L209,131.8 Z" fill="#eceef2" stroke="#24262a" stroke-width="1.15"/><text x="209" y="128.2" font-family="Liberation Sans" font-size="14" text-anchor="middle" fill="#1a1a1c">3</text><path d="M339.5,123 L352,114.2 L364.5,123 L352,131.8 Z" fill="#eceef2" stroke="#24262a" stroke-width="1.15"/><text x="352" y="128.2" font-family="Liberation Sans" font-size="14" text-anchor="middle" fill="#1a1a1c">0</text><path d="M482.5,123 L495,114.2 L507.5,123 L495,131.8 Z" fill="#eceef2" stroke="#24262a" stroke-width="1.15"/><text x="495" y="128.2" font-family="Liberation Sans" font-size="14" text-anchor="middle" fill="#1a1a1c">3</text><path d="M625.5,123 L638,114.2 L650.5,123 L638,131.8 Z" fill="#eceef2" stroke="#24262a" stroke-width="1.15"/><text x="638" y="128.2" font-family="Liberation Sans" font-size="14" text-anchor="middle" fill="#1a1a1c">0</text><path d="M768.5,123 L781,114.2 L793.5,123 L781,131.8 Z" fill="#eceef2" stroke="#24262a" stroke-width="1.15"/><text x="781" y="128.2" font-family="Liberation Sans" font-size="14" text-anchor="middle" fill="#1a1a1c">3</text><path d="M893.5,123 L906,114.2 L918.5,123 L906,131.8 Z" fill="#f7f8fa" stroke="#24262a" stroke-width="1.15"/><path d="M899.5,123 L912,114.2 L924.5,123 L912,131.8 Z" fill="#f7f8fa" stroke="#24262a" stroke-width="1.15"/><path d="M905.5,123 L918,114.2 L930.5,123 L918,131.8 Z" fill="#f7f8fa" stroke="#24262a" stroke-width="1.15"/><path d="M911.5,123 L924,114.2 L936.5,123 L924,131.8 Z" fill="#eceef2" stroke="#24262a" stroke-width="1.15"/><text x="924" y="128.2" font-family="Liberation Sans" font-size="14" text-anchor="middle" fill="#1a1a1c">0</text><path d="M1054.5,123 L1067,114.2 L1079.5,123 L1067,131.8 Z" fill="#eceef2" stroke="#24262a" stroke-width="1.15"/><text x="1067" y="128.2" font-family="Liberation Sans" font-size="14" text-anchor="middle" fill="#1a1a1c">3</text><path d="M53.5,153 L66,144.2 L78.5,153 L66,161.8 Z" fill="#eceef2" stroke="#24262a" stroke-width="1.15"/><text x="66" y="158.2" font-family="Liberation Sans" font-size="14" text-anchor="middle" fill="#1a1a1c">0</text><path d="M196.5,153 L209,144.2 L221.5,153 L209,161.8 Z" fill="#eceef2" stroke="#24262a" stroke-width="1.15"/><text x="209" y="158.2" font-family="Liberation Sans" font-size="14" text-anchor="middle" fill="#1a1a1c">3</text><path d="M339.5,153 L352,144.2 L364.5,153 L352,161.8 Z" fill="#eceef2" stroke="#24262a" stroke-width="1.15"/><text x="352" y="158.2" font-family="Liberation Sans" font-size="14" text-anchor="middle" fill="#1a1a1c">0</text><path d="M482.5,153 L495,144.2 L507.5,153 L495,161.8 Z" fill="#eceef2" stroke="#24262a" stroke-width="1.15"/><text x="495" y="158.2" font-family="Liberation Sans" font-size="14" text-anchor="middle" fill="#1a1a1c">3</text><path d="M625.5,153 L638,144.2 L650.5,153 L638,161.8 Z" fill="#eceef2" stroke="#24262a" stroke-width="1.15"/><text x="638" y="158.2" font-family="Liberation Sans" font-size="14" text-anchor="middle" fill="#1a1a1c">0</text><path d="M768.5,153 L781,144.2 L793.5,153 L781,161.8 Z" fill="#eceef2" stroke="#24262a" stroke-width="1.15"/><text x="781" y="158.2" font-family="Liberation Sans" font-size="14" text-anchor="middle" fill="#1a1a1c">3</text><path d="M911.5,153 L924,144.2 L936.5,153 L924,161.8 Z" fill="#eceef2" stroke="#24262a" stroke-width="1.15"/><text x="924" y="158.2" font-family="Liberation Sans" font-size="14" text-anchor="middle" fill="#1a1a1c">0</text><path d="M1054.5,153 L1067,144.2 L1079.5,153 L1067,161.8 Z" fill="#eceef2" stroke="#24262a" stroke-width="1.15"/><text x="1067" y="158.2" font-family="Liberation Sans" font-size="14" text-anchor="middle" fill="#1a1a1c">3</text><path d="M53.5,183 L66,174.2 L78.5,183 L66,191.8 Z" fill="#eceef2" stroke="#24262a" stroke-width="1.15"/><text x="66" y="188.2" font-family="Liberation Sans" font-size="14" text-anchor="middle" fill="#1a1a1c">0</text><path d="M196.5,183 L209,174.2 L221.5,183 L209,191.8 Z" fill="#eceef2" stroke="#24262a" stroke-width="1.15"/><text x="209" y="188.2" font-family="Liberation Sans" font-size="14" text-anchor="middle" fill="#1a1a1c">3</text><path d="M339.5,183 L352,174.2 L364.5,183 L352,191.8 Z" fill="#eceef2" stroke="#24262a" stroke-width="1.15"/><text x="352" y="188.2" font-family="Liberation Sans" font-size="14" text-anchor="middle" fill="#1a1a1c">0</text><path d="M482.5,183 L495,174.2 L507.5,183 L495,191.8 Z" fill="#eceef2" stroke="#24262a" stroke-width="1.15"/><text x="495" y="188.2" font-family="Liberation Sans" font-size="14" text-anchor="middle" fill="#1a1a1c">3</text><path d="M625.5,183 L638,174.2 L650.5,183 L638,191.8 Z" fill="#eceef2" stroke="#24262a" stroke-width="1.15"/><text x="638" y="188.2" font-family="Liberation Sans" font-size="14" text-anchor="middle" fill="#1a1a1c">0</text><path d="M768.5,183 L781,174.2 L793.5,183 L781,191.8 Z" fill="#eceef2" stroke="#24262a" stroke-width="1.15"/><text x="781" y="188.2" font-family="Liberation Sans" font-size="14" text-anchor="middle" fill="#1a1a1c">3</text><path d="M911.5,183 L924,174.2 L936.5,183 L924,191.8 Z" fill="#eceef2" stroke="#24262a" stroke-width="1.15"/><text x="924" y="188.2" font-family="Liberation Sans" font-size="14" text-anchor="middle" fill="#1a1a1c">0</text><path d="M1054.5,183 L1067,174.2 L1079.5,183 L1067,191.8 Z" fill="#eceef2" stroke="#24262a" stroke-width="1.15"/><text x="1067" y="188.2" font-family="Liberation Sans" font-size="14" text-anchor="middle" fill="#1a1a1c">3</text></svg>
<div style="position:absolute;left:1151px;top:35px;width:2px;height:890px;background:#2a2a2f"></div>
<div style="position:absolute;left:18.00px;top:320.80px;height:20px;line-height:20px;font-size:16px;color:#dcdcdc;font-weight:normal;white-space:nowrap;transform:scaleX(0.9380);transform-origin:0.00px 50%;">Pattern Track</div>
<div style="position:absolute;left:655px;top:318px;width:60px;height:24px;box-sizing:border-box;border:1px solid #7f8888;border-radius:5px;background:#27272c"></div>
<div style="position:absolute;left:635.12px;width:100px;text-align:center;top:321.60px;height:20px;line-height:20px;font-size:12.8px;color:#fff;font-weight:normal;white-space:nowrap;-webkit-text-stroke:0.55px #fff;letter-spacing:0.242px;">Export</div>
<div style="position:absolute;left:723px;top:318px;width:60px;height:24px;box-sizing:border-box;border:1px solid #7f8888;border-radius:5px;background:#27272c"></div>
<div style="position:absolute;left:703.27px;width:100px;text-align:center;top:321.60px;height:20px;line-height:20px;font-size:12.8px;color:#fff;font-weight:normal;white-space:nowrap;-webkit-text-stroke:0.55px #fff;letter-spacing:0.542px;">Import</div>
<div style="position:absolute;left:799px;top:318px;width:80px;height:24px;box-sizing:border-box;border:1px solid #7f8888;border-radius:5px;background:#27272c"></div>
<div style="position:absolute;left:778.89px;width:120px;text-align:center;top:321.60px;height:20px;line-height:20px;font-size:12.8px;color:#fff;font-weight:normal;white-space:nowrap;-webkit-text-stroke:0.55px #fff;letter-spacing:-0.221px;">Randomize</div>
<div style="position:absolute;left:887px;top:318px;width:100px;height:24px;box-sizing:border-box;border:1px solid #303036;border-radius:5px;background:#28282d"></div>
<div style="position:absolute;left:867.00px;width:140px;text-align:center;top:321.60px;height:20px;line-height:20px;font-size:12.8px;color:#fff;font-weight:normal;white-space:nowrap;-webkit-text-stroke:0.55px #fff;transform:scaleX(0.9495);transform-origin:50% 50%;">Presets</div>
<div style="position:absolute;left:1008.50px;top:321.10px;height:20px;line-height:20px;font-size:12.5px;color:#7a7a7f;font-weight:normal;white-space:nowrap;letter-spacing:-0.266px;">Grid:</div>
<div style="position:absolute;left:1051px;top:318px;width:100px;height:24px;box-sizing:border-box;border:1px solid #36363c;border-radius:5px;background:#2a2a2f"></div>
<div style="position:absolute;left:1058.00px;top:321.90px;height:20px;line-height:20px;font-size:15.5px;color:#fff;font-weight:normal;white-space:nowrap;-webkit-text-stroke:0.55px #fff;letter-spacing:0.284px;">1/16</div>
<svg style="position:absolute;left:1121.75px;top:325.3px" width="18.5" height="11"><polyline points="2,2 9.25,9 16.5,2" fill="none" stroke="#b8b8b8" stroke-width="1.8" stroke-linecap="round" stroke-linejoin="round"/></svg>
<div style="position:absolute;left:2px;top:352px;width:1149px;height:1px;background:#2c2c31"></div>
<div style="position:absolute;left:82.00px;width:20px;text-align:center;top:361.40px;height:20px;line-height:20px;font-size:10.5px;color:#b8b8bd;font-weight:normal;white-space:nowrap;">4</div>
<div style="position:absolute;left:282.00px;width:20px;text-align:center;top:361.40px;height:20px;line-height:20px;font-size:10.5px;color:#b8b8bd;font-weight:normal;white-space:nowrap;">5</div>
<div style="position:absolute;left:482.00px;width:20px;text-align:center;top:361.40px;height:20px;line-height:20px;font-size:10.5px;color:#b8b8bd;font-weight:normal;white-space:nowrap;">6</div>
<div style="position:absolute;left:682.00px;width:20px;text-align:center;top:361.40px;height:20px;line-height:20px;font-size:10.5px;color:#b8b8bd;font-weight:normal;white-space:nowrap;">7</div>
<div style="position:absolute;left:882.00px;width:20px;text-align:center;top:361.40px;height:20px;line-height:20px;font-size:10.5px;color:#b8b8bd;font-weight:normal;white-space:nowrap;">8</div>
<div style="position:absolute;left:1082.00px;width:20px;text-align:center;top:361.40px;height:20px;line-height:20px;font-size:10.5px;color:#b8b8bd;font-weight:normal;white-space:nowrap;">9</div>
<div style="position:absolute;left:1px;top:377.6px;width:1150px;height:6.4px;background:#25252a"></div>
<div style="position:absolute;left:1px;top:446px;width:1150px;height:10px;background:#25252a"></div>
<svg style="position:absolute;left:0;top:353px" width="1151" height="110"><line x1="10" y1="25" x2="10" y2="32" stroke="#313136" stroke-width="1.3"/><line x1="10" y1="93" x2="10" y2="103" stroke="#313136" stroke-width="1.3"/><line x1="23" y1="25" x2="23" y2="32" stroke="#313136" stroke-width="1.3"/><line x1="23" y1="93" x2="23" y2="103" stroke="#313136" stroke-width="1.3"/><line x1="35" y1="25" x2="35" y2="32" stroke="#36363b" stroke-width="1.3"/><line x1="35" y1="93" x2="35" y2="103" stroke="#36363b" stroke-width="1.3"/><line x1="48" y1="25" x2="48" y2="32" stroke="#313136" stroke-width="1.3"/><line x1="48" y1="93" x2="48" y2="103" stroke="#313136" stroke-width="1.3"/><line x1="60" y1="25" x2="60" y2="32" stroke="#313136" stroke-width="1.3"/><line x1="60" y1="93" x2="60" y2="103" stroke="#313136" stroke-width="1.3"/><line x1="73" y1="25" x2="73" y2="32" stroke="#313136" stroke-width="1.3"/><line x1="73" y1="93" x2="73" y2="103" stroke="#313136" stroke-width="1.3"/><line x1="85.0" y1="25" x2="85.0" y2="103" stroke="#4c4c52" stroke-width="2"/><line x1="98" y1="25" x2="98" y2="32" stroke="#313136" stroke-width="1.3"/><line x1="98" y1="93" x2="98" y2="103" stroke="#313136" stroke-width="1.3"/><line x1="110" y1="25" x2="110" y2="32" stroke="#313136" stroke-width="1.3"/><line x1="110" y1="93" x2="110" y2="103" stroke="#313136" stroke-width="1.3"/><line x1="123" y1="25" x2="123" y2="32" stroke="#313136" stroke-width="1.3"/><line x1="123" y1="93" x2="123" y2="103" stroke="#313136" stroke-width="1.3"/><line x1="135" y1="25" x2="135" y2="32" stroke="#36363b" stroke-width="1.3"/><line x1="135" y1="93" x2="135" y2="103" stroke="#36363b" stroke-width="1.3"/><line x1="148" y1="25" x2="148" y2="32" stroke="#313136" stroke-width="1.3"/><line x1="148" y1="93" x2="148" y2="103" stroke="#313136" stroke-width="1.3"/><line x1="160" y1="25" x2="160" y2="32" stroke="#313136" stroke-width="1.3"/><line x1="160" y1="93" x2="160" y2="103" stroke="#313136" stroke-width="1.3"/><line x1="173" y1="25" x2="173" y2="32" stroke="#313136" stroke-width="1.3"/><line x1="173" y1="93" x2="173" y2="103" stroke="#313136" stroke-width="1.3"/><line x1="185" y1="25" x2="185" y2="32" stroke="#36363b" stroke-width="1.3"/><line x1="185" y1="93" x2="185" y2="103" stroke="#36363b" stroke-width="1.3"/><line x1="198" y1="25" x2="198" y2="32" stroke="#313136" stroke-width="1.3"/><line x1="198" y1="93" x2="198" y2="103" stroke="#313136" stroke-width="1.3"/><line x1="210" y1="25" x2="210" y2="32" stroke="#313136" stroke-width="1.3"/><line x1="210" y1="93" x2="210" y2="103" stroke="#313136" stroke-width="1.3"/><line x1="223" y1="25" x2="223" y2="32" stroke="#313136" stroke-width="1.3"/><line x1="223" y1="93" x2="223" y2="103" stroke="#313136" stroke-width="1.3"/><line x1="235" y1="25" x2="235" y2="32" stroke="#36363b" stroke-width="1.3"/><line x1="235" y1="93" x2="235" y2="103" stroke="#36363b" stroke-width="1.3"/><line x1="248" y1="25" x2="248" y2="32" stroke="#313136" stroke-width="1.3"/><line x1="248" y1="93" x2="248" y2="103" stroke="#313136" stroke-width="1.3"/><line x1="260" y1="25" x2="260" y2="32" stroke="#313136" stroke-width="1.3"/><line x1="260" y1="93" x2="260" y2="103" stroke="#313136" stroke-width="1.3"/><line x1="273" y1="25" x2="273" y2="32" stroke="#313136" stroke-width="1.3"/><line x1="273" y1="93" x2="273" y2="103" stroke="#313136" stroke-width="1.3"/><line x1="285.0" y1="25" x2="285.0" y2="103" stroke="#4c4c52" stroke-width="2"/><line x1="298" y1="25" x2="298" y2="32" stroke="#313136" stroke-width="1.3"/><line x1="298" y1="93" x2="298" y2="103" stroke="#313136" stroke-width="1.3"/><line x1="310" y1="25" x2="310" y2="32" stroke="#313136" stroke-width="1.3"/><line x1="310" y1="93" x2="310" y2="103" stroke="#313136" stroke-width="1.3"/><line x1="323" y1="25" x2="323" y2="32" stroke="#313136" stroke-width="1.3"/><line x1="323" y1="93" x2="323" y2="103" stroke="#313136" stroke-width="1.3"/><line x1="335" y1="25" x2="335" y2="32" stroke="#36363b" stroke-width="1.3"/><line x1="335" y1="93" x2="335" y2="103" stroke="#36363b" stroke-width="1.3"/><line x1="348" y1="25" x2="348" y2="32" stroke="#313136" stroke-width="1.3"/><line x1="348" y1="93" x2="348" y2="103" stroke="#313136" stroke-width="1.3"/><line x1="360" y1="25" x2="360" y2="32" stroke="#313136" stroke-width="1.3"/><line x1="360" y1="93" x2="360" y2="103" stroke="#313136" stroke-width="1.3"/><line x1="373" y1="25" x2="373" y2="32" stroke="#313136" stroke-width="1.3"/><line x1="373" y1="93" x2="373" y2="103" stroke="#313136" stroke-width="1.3"/><line x1="385" y1="25" x2="385" y2="32" stroke="#36363b" stroke-width="1.3"/><line x1="385" y1="93" x2="385" y2="103" stroke="#36363b" stroke-width="1.3"/><line x1="398" y1="25" x2="398" y2="32" stroke="#313136" stroke-width="1.3"/><line x1="398" y1="93" x2="398" y2="103" stroke="#313136" stroke-width="1.3"/><line x1="410" y1="25" x2="410" y2="32" stroke="#313136" stroke-width="1.3"/><line x1="410" y1="93" x2="410" y2="103" stroke="#313136" stroke-width="1.3"/><line x1="423" y1="25" x2="423" y2="32" stroke="#313136" stroke-width="1.3"/><line x1="423" y1="93" x2="423" y2="103" stroke="#313136" stroke-width="1.3"/><line x1="435" y1="25" x2="435" y2="32" stroke="#36363b" stroke-width="1.3"/><line x1="435" y1="93" x2="435" y2="103" stroke="#36363b" stroke-width="1.3"/><line x1="448" y1="25" x2="448" y2="32" stroke="#313136" stroke-width="1.3"/><line x1="448" y1="93" x2="448" y2="103" stroke="#313136" stroke-width="1.3"/><line x1="460" y1="25" x2="460" y2="32" stroke="#313136" stroke-width="1.3"/><line x1="460" y1="93" x2="460" y2="103" stroke="#313136" stroke-width="1.3"/><line x1="473" y1="25" x2="473" y2="32" stroke="#313136" stroke-width="1.3"/><line x1="473" y1="93" x2="473" y2="103" stroke="#313136" stroke-width="1.3"/><line x1="485.0" y1="25" x2="485.0" y2="103" stroke="#4c4c52" stroke-width="2"/><line x1="498" y1="25" x2="498" y2="32" stroke="#313136" stroke-width="1.3"/><line x1="498" y1="93" x2="498" y2="103" stroke="#313136" stroke-width="1.3"/><line x1="510" y1="25" x2="510" y2="32" stroke="#313136" stroke-width="1.3"/><line x1="510" y1="93" x2="510" y2="103" stroke="#313136" stroke-width="1.3"/><line x1="523" y1="25" x2="523" y2="32" stroke="#313136" stroke-width="1.3"/><line x1="523" y1="93" x2="523" y2="103" stroke="#313136" stroke-width="1.3"/><line x1="535" y1="25" x2="535" y2="32" stroke="#36363b" stroke-width="1.3"/><line x1="535" y1="93" x2="535" y2="103" stroke="#36363b" stroke-width="1.3"/><line x1="548" y1="25" x2="548" y2="32" stroke="#313136" stroke-width="1.3"/><line x1="548" y1="93" x2="548" y2="103" stroke="#313136" stroke-width="1.3"/><line x1="560" y1="25" x2="560" y2="32" stroke="#313136" stroke-width="1.3"/><line x1="560" y1="93" x2="560" y2="103" stroke="#313136" stroke-width="1.3"/><line x1="573" y1="25" x2="573" y2="32" stroke="#313136" stroke-width="1.3"/><line x1="573" y1="93" x2="573" y2="103" stroke="#313136" stroke-width="1.3"/><line x1="585" y1="25" x2="585" y2="32" stroke="#36363b" stroke-width="1.3"/><line x1="585" y1="93" x2="585" y2="103" stroke="#36363b" stroke-width="1.3"/><line x1="598" y1="25" x2="598" y2="32" stroke="#313136" stroke-width="1.3"/><line x1="598" y1="93" x2="598" y2="103" stroke="#313136" stroke-width="1.3"/><line x1="610" y1="25" x2="610" y2="32" stroke="#313136" stroke-width="1.3"/><line x1="610" y1="93" x2="610" y2="103" stroke="#313136" stroke-width="1.3"/><line x1="623" y1="25" x2="623" y2="32" stroke="#313136" stroke-width="1.3"/><line x1="623" y1="93" x2="623" y2="103" stroke="#313136" stroke-width="1.3"/><line x1="635" y1="25" x2="635" y2="32" stroke="#36363b" stroke-width="1.3"/><line x1="635" y1="93" x2="635" y2="103" stroke="#36363b" stroke-width="1.3"/><line x1="648" y1="25" x2="648" y2="32" stroke="#313136" stroke-width="1.3"/><line x1="648" y1="93" x2="648" y2="103" stroke="#313136" stroke-width="1.3"/><line x1="660" y1="25" x2="660" y2="32" stroke="#313136" stroke-width="1.3"/><line x1="660" y1="93" x2="660" y2="103" stroke="#313136" stroke-width="1.3"/><line x1="673" y1="25" x2="673" y2="32" stroke="#313136" stroke-width="1.3"/><line x1="673" y1="93" x2="673" y2="103" stroke="#313136" stroke-width="1.3"/><line x1="685.0" y1="25" x2="685.0" y2="103" stroke="#4c4c52" stroke-width="2"/><line x1="698" y1="25" x2="698" y2="32" stroke="#313136" stroke-width="1.3"/><line x1="698" y1="93" x2="698" y2="103" stroke="#313136" stroke-width="1.3"/><line x1="710" y1="25" x2="710" y2="32" stroke="#313136" stroke-width="1.3"/><line x1="710" y1="93" x2="710" y2="103" stroke="#313136" stroke-width="1.3"/><line x1="723" y1="25" x2="723" y2="32" stroke="#313136" stroke-width="1.3"/><line x1="723" y1="93" x2="723" y2="103" stroke="#313136" stroke-width="1.3"/><line x1="735" y1="25" x2="735" y2="32" stroke="#36363b" stroke-width="1.3"/><line x1="735" y1="93" x2="735" y2="103" stroke="#36363b" stroke-width="1.3"/><line x1="748" y1="25" x2="748" y2="32" stroke="#313136" stroke-width="1.3"/><line x1="748" y1="93" x2="748" y2="103" stroke="#313136" stroke-width="1.3"/><line x1="760" y1="25" x2="760" y2="32" stroke="#313136" stroke-width="1.3"/><line x1="760" y1="93" x2="760" y2="103" stroke="#313136" stroke-width="1.3"/><line x1="773" y1="25" x2="773" y2="32" stroke="#313136" stroke-width="1.3"/><line x1="773" y1="93" x2="773" y2="103" stroke="#313136" stroke-width="1.3"/><line x1="785" y1="25" x2="785" y2="32" stroke="#36363b" stroke-width="1.3"/><line x1="785" y1="93" x2="785" y2="103" stroke="#36363b" stroke-width="1.3"/><line x1="798" y1="25" x2="798" y2="32" stroke="#313136" stroke-width="1.3"/><line x1="798" y1="93" x2="798" y2="103" stroke="#313136" stroke-width="1.3"/><line x1="810" y1="25" x2="810" y2="32" stroke="#313136" stroke-width="1.3"/><line x1="810" y1="93" x2="810" y2="103" stroke="#313136" stroke-width="1.3"/><line x1="823" y1="25" x2="823" y2="32" stroke="#313136" stroke-width="1.3"/><line x1="823" y1="93" x2="823" y2="103" stroke="#313136" stroke-width="1.3"/><line x1="835" y1="25" x2="835" y2="32" stroke="#36363b" stroke-width="1.3"/><line x1="835" y1="93" x2="835" y2="103" stroke="#36363b" stroke-width="1.3"/><line x1="848" y1="25" x2="848" y2="32" stroke="#313136" stroke-width="1.3"/><line x1="848" y1="93" x2="848" y2="103" stroke="#313136" stroke-width="1.3"/><line x1="860" y1="25" x2="860" y2="32" stroke="#313136" stroke-width="1.3"/><line x1="860" y1="93" x2="860" y2="103" stroke="#313136" stroke-width="1.3"/><line x1="873" y1="25" x2="873" y2="32" stroke="#313136" stroke-width="1.3"/><line x1="873" y1="93" x2="873" y2="103" stroke="#313136" stroke-width="1.3"/><line x1="885.0" y1="25" x2="885.0" y2="103" stroke="#4c4c52" stroke-width="2"/><line x1="898" y1="25" x2="898" y2="32" stroke="#313136" stroke-width="1.3"/><line x1="898" y1="93" x2="898" y2="103" stroke="#313136" stroke-width="1.3"/><line x1="910" y1="25" x2="910" y2="32" stroke="#313136" stroke-width="1.3"/><line x1="910" y1="93" x2="910" y2="103" stroke="#313136" stroke-width="1.3"/><line x1="923" y1="25" x2="923" y2="32" stroke="#313136" stroke-width="1.3"/><line x1="923" y1="93" x2="923" y2="103" stroke="#313136" stroke-width="1.3"/><line x1="935" y1="25" x2="935" y2="32" stroke="#36363b" stroke-width="1.3"/><line x1="935" y1="93" x2="935" y2="103" stroke="#36363b" stroke-width="1.3"/><line x1="948" y1="25" x2="948" y2="32" stroke="#313136" stroke-width="1.3"/><line x1="948" y1="93" x2="948" y2="103" stroke="#313136" stroke-width="1.3"/><line x1="960" y1="25" x2="960" y2="32" stroke="#313136" stroke-width="1.3"/><line x1="960" y1="93" x2="960" y2="103" stroke="#313136" stroke-width="1.3"/><line x1="973" y1="25" x2="973" y2="32" stroke="#313136" stroke-width="1.3"/><line x1="973" y1="93" x2="973" y2="103" stroke="#313136" stroke-width="1.3"/><line x1="985" y1="25" x2="985" y2="32" stroke="#36363b" stroke-width="1.3"/><line x1="985" y1="93" x2="985" y2="103" stroke="#36363b" stroke-width="1.3"/><line x1="998" y1="25" x2="998" y2="32" stroke="#313136" stroke-width="1.3"/><line x1="998" y1="93" x2="998" y2="103" stroke="#313136" stroke-width="1.3"/><line x1="1010" y1="25" x2="1010" y2="32" stroke="#313136" stroke-width="1.3"/><line x1="1010" y1="93" x2="1010" y2="103" stroke="#313136" stroke-width="1.3"/><line x1="1023" y1="25" x2="1023" y2="32" stroke="#313136" stroke-width="1.3"/><line x1="1023" y1="93" x2="1023" y2="103" stroke="#313136" stroke-width="1.3"/><line x1="1035" y1="25" x2="1035" y2="32" stroke="#36363b" stroke-width="1.3"/><line x1="1035" y1="93" x2="1035" y2="103" stroke="#36363b" stroke-width="1.3"/><line x1="1048" y1="25" x2="1048" y2="32" stroke="#313136" stroke-width="1.3"/><line x1="1048" y1="93" x2="1048" y2="103" stroke="#313136" stroke-width="1.3"/><line x1="1060" y1="25" x2="1060" y2="32" stroke="#313136" stroke-width="1.3"/><line x1="1060" y1="93" x2="1060" y2="103" stroke="#313136" stroke-width="1.3"/><line x1="1073" y1="25" x2="1073" y2="32" stroke="#313136" stroke-width="1.3"/><line x1="1073" y1="93" x2="1073" y2="103" stroke="#313136" stroke-width="1.3"/><line x1="1085.0" y1="25" x2="1085.0" y2="103" stroke="#4c4c52" stroke-width="2"/><line x1="1098" y1="25" x2="1098" y2="32" stroke="#313136" stroke-width="1.3"/><line x1="1098" y1="93" x2="1098" y2="103" stroke="#313136" stroke-width="1.3"/><line x1="1110" y1="25" x2="1110" y2="32" stroke="#313136" stroke-width="1.3"/><line x1="1110" y1="93" x2="1110" y2="103" stroke="#313136" stroke-width="1.3"/><line x1="1123" y1="25" x2="1123" y2="32" stroke="#313136" stroke-width="1.3"/><line x1="1123" y1="93" x2="1123" y2="103" stroke="#313136" stroke-width="1.3"/><line x1="1135" y1="25" x2="1135" y2="32" stroke="#36363b" stroke-width="1.3"/><line x1="1135" y1="93" x2="1135" y2="103" stroke="#36363b" stroke-width="1.3"/><line x1="1148" y1="25" x2="1148" y2="32" stroke="#313136" stroke-width="1.3"/><line x1="1148" y1="93" x2="1148" y2="103" stroke="#313136" stroke-width="1.3"/></svg>
<div style="position:absolute;left:2px;top:384px;width:82px;height:62px;background:#43599b;border-radius:0 6px 6px 0"></div>
<div style="position:absolute;left:86px;top:384px;width:398px;height:62px;background:#43599b;border-radius:6px"></div>
<div style="position:absolute;left:484.5px;top:382.8px;width:401px;height:64px;background:#5c79bb;border-radius:7px;box-sizing:border-box;border:2px solid #fff"></div>
<div style="position:absolute;left:886px;top:384px;width:265px;height:62px;background:#43599b;border-radius:6px 0 0 6px"></div>
<div style="position:absolute;left:95.50px;top:392.00px;height:20px;line-height:20px;font-size:13px;color:#fff;font-weight:bold;white-space:nowrap;letter-spacing:0.016px;">stroke 01</div>
<div style="position:absolute;left:95.50px;top:415.20px;height:20px;line-height:20px;font-size:10.2px;color:#dfe4f0;font-weight:normal;white-space:nowrap;-webkit-text-stroke:0.2px #dfe4f0;letter-spacing:0.088px;">8 beats &nbsp;•&nbsp; 2 picks</div>
<div style="position:absolute;left:495.50px;top:392.00px;height:20px;line-height:20px;font-size:13px;color:#fff;font-weight:bold;white-space:nowrap;letter-spacing:0.016px;">stroke 01</div>
<div style="position:absolute;left:495.50px;top:415.20px;height:20px;line-height:20px;font-size:10.2px;color:#dfe4f0;font-weight:normal;white-space:nowrap;-webkit-text-stroke:0.2px #dfe4f0;letter-spacing:0.038px;">8 beats &nbsp;•&nbsp; 19 picks</div>
<div style="position:absolute;left:895.50px;top:392.00px;height:20px;line-height:20px;font-size:13px;color:#fff;font-weight:bold;white-space:nowrap;letter-spacing:0.016px;">stroke 01</div>
<div style="position:absolute;left:895.50px;top:415.20px;height:20px;line-height:20px;font-size:10.2px;color:#dfe4f0;font-weight:normal;white-space:nowrap;-webkit-text-stroke:0.2px #dfe4f0;letter-spacing:0.038px;">8 beats &nbsp;•&nbsp; 18 picks</div>
<div style="position:absolute;left:18.00px;top:470.80px;height:20px;line-height:20px;font-size:16px;color:#dcdcdc;font-weight:normal;white-space:nowrap;letter-spacing:-0.257px;">Pattern Editor</div>
<div style="position:absolute;left:356.60px;top:471.10px;height:20px;line-height:20px;font-size:12.5px;color:#7a7a7f;font-weight:normal;white-space:nowrap;transform:scaleX(0.8689);transform-origin:0.00px 50%;">Capo:</div>
<div style="position:absolute;left:408px;top:477.0px;width:62px;height:6px;background:#2a2a2f;border-radius:3.0px"></div>
<div style="position:absolute;left:408px;top:477.0px;width:30.69999999999999px;height:6px;background:#4a80f0;border-radius:3.0px"></div>
<div style="position:absolute;left:432.5px;top:473.8px;width:12.4px;height:12.4px;border-radius:50%;background:#fff;box-shadow:0 0 1.5px rgba(0,0,0,.6)"></div>
<div style="position:absolute;left:491.80px;top:470.90px;height:20px;line-height:20px;font-size:14px;color:#fff;font-weight:normal;white-space:nowrap;-webkit-text-stroke:0.5px #fff;transform:scaleX(0.9266);transform-origin:0.00px 50%;">12</div>
<div style="position:absolute;left:532.00px;top:471.10px;height:20px;line-height:20px;font-size:12.5px;color:#7a7a7f;font-weight:normal;white-space:nowrap;transform:scaleX(0.9198);transform-origin:0.00px 50%;">Vel:</div>
<div style="position:absolute;left:574px;top:477.0px;width:42px;height:6px;background:#2a2a2f;border-radius:3.0px"></div>
<div style="position:absolute;left:574px;top:477.0px;width:31px;height:6px;background:#4a80f0;border-radius:3.0px"></div>
<div style="position:absolute;left:598.8px;top:473.8px;width:12.4px;height:12.4px;border-radius:50%;background:#fff;box-shadow:0 0 1.5px rgba(0,0,0,.6)"></div>
<div style="position:absolute;left:634.00px;top:470.90px;height:20px;line-height:20px;font-size:14px;color:#fff;font-weight:normal;white-space:nowrap;-webkit-text-stroke:0.5px #fff;transform:scaleX(0.9538);transform-origin:0.00px 50%;">100</div>
<div style="position:absolute;left:900.60px;top:471.10px;height:20px;line-height:20px;font-size:12.5px;color:#7a7a7f;font-weight:normal;white-space:nowrap;letter-spacing:-0.129px;">Tuning Lock</div>
<div style="position:absolute;left:986.5px;top:472px;width:18.0px;height:17px;box-sizing:border-box;border:1.5px solid #7a7a80;border-radius:4px;background:transparent"></div>
<div style="position:absolute;left:1028.60px;top:471.10px;height:20px;line-height:20px;font-size:12.5px;color:#7a7a7f;font-weight:normal;white-space:nowrap;letter-spacing:-0.266px;">Grid:</div>
<div style="position:absolute;left:1071px;top:468px;width:80px;height:24px;box-sizing:border-box;border:1px solid #36363c;border-radius:5px;background:#2a2a2f"></div>
<div style="position:absolute;left:1078.00px;top:471.70px;height:20px;line-height:20px;font-size:15.5px;color:#fff;font-weight:normal;white-space:nowrap;-webkit-text-stroke:0.55px #fff;letter-spacing:0.517px;">1/16</div>
<svg style="position:absolute;left:1121.75px;top:475.0px" width="18.5" height="11"><polyline points="2,2 9.25,9 16.5,2" fill="none" stroke="#b8b8b8" stroke-width="1.8" stroke-linecap="round" stroke-linejoin="round"/></svg>
<div style="position:absolute;left:2px;top:503px;width:1149px;height:1px;background:#2c2c31"></div>
<div style="position:absolute;left:2px;top:504px;width:1149px;height:270px;background:#262626"></div>
<div style="position:absolute;left:2px;top:504px;width:59px;height:270px;background:#1b1b1b"></div>
<div style="position:absolute;left:61px;top:534px;width:81px;height:30px;background:#33251d"></div>
<div style="position:absolute;left:142px;top:534px;width:920px;height:30px;background:#33251d"></div>
<div style="position:absolute;left:1062px;top:534px;width:89px;height:30px;background:#33251d"></div>
<div style="position:absolute;left:61px;top:564px;width:81px;height:30px;background:#262626"></div>
<div style="position:absolute;left:142px;top:564px;width:920px;height:30px;background:#303030"></div>
<div style="position:absolute;left:1062px;top:564px;width:89px;height:30px;background:#262626"></div>
<div style="position:absolute;left:61px;top:594px;width:81px;height:30px;background:#212121"></div>
<div style="position:absolute;left:142px;top:594px;width:920px;height:30px;background:#2c2c2c"></div>
<div style="position:absolute;left:1062px;top:594px;width:89px;height:30px;background:#212121"></div>
<div style="position:absolute;left:61px;top:624px;width:81px;height:30px;background:#262626"></div>
<div style="position:absolute;left:142px;top:624px;width:920px;height:30px;background:#303030"></div>
<div style="position:absolute;left:1062px;top:624px;width:89px;height:30px;background:#262626"></div>
<div style="position:absolute;left:61px;top:654px;width:81px;height:30px;background:#212121"></div>
<div style="position:absolute;left:142px;top:654px;width:920px;height:30px;background:#2c2c2c"></div>
<div style="position:absolute;left:1062px;top:654px;width:89px;height:30px;background:#212121"></div>
<div style="position:absolute;left:61px;top:684px;width:81px;height:30px;background:#262626"></div>
<div style="position:absolute;left:142px;top:684px;width:920px;height:30px;background:#303030"></div>
<div style="position:absolute;left:1062px;top:684px;width:89px;height:30px;background:#262626"></div>
<div style="position:absolute;left:61px;top:714px;width:81px;height:30px;background:#212121"></div>
<div style="position:absolute;left:142px;top:714px;width:920px;height:30px;background:#2c2c2c"></div>
<div style="position:absolute;left:1062px;top:714px;width:89px;height:30px;background:#212121"></div>
<div style="position:absolute;left:61px;top:744px;width:81px;height:30px;background:#271d36"></div>
<div style="position:absolute;left:142px;top:744px;width:920px;height:30px;background:#33283f"></div>
<div style="position:absolute;left:1062px;top:744px;width:89px;height:30px;background:#271d36"></div>
<div style="position:absolute;left:61px;top:504px;width:1090px;height:30px;background:#262626"></div>
<svg style="position:absolute;left:0;top:504px" width="1151" height="270"><line x1="56.25" y1="30" x2="56.25" y2="270" stroke="rgba(255,255,255,0.045)" stroke-width="1.5"/><line x1="85.00" y1="30" x2="85.00" y2="270" stroke="rgba(255,255,255,0.045)" stroke-width="1.5"/><line x1="113.75" y1="30" x2="113.75" y2="270" stroke="rgba(255,255,255,0.045)" stroke-width="1.5"/><line x1="142.50" y1="30" x2="142.50" y2="270" stroke="rgba(255,255,255,0.11)" stroke-width="1.5"/><line x1="171.25" y1="30" x2="171.25" y2="270" stroke="rgba(255,255,255,0.045)" stroke-width="1.5"/><line x1="200.00" y1="30" x2="200.00" y2="270" stroke="rgba(255,255,255,0.045)" stroke-width="1.5"/><line x1="228.75" y1="30" x2="228.75" y2="270" stroke="rgba(255,255,255,0.045)" stroke-width="1.5"/><line x1="257.50" y1="30" x2="257.50" y2="270" stroke="rgba(255,255,255,0.065)" stroke-width="1.5"/><line x1="286.25" y1="30" x2="286.25" y2="270" stroke="rgba(255,255,255,0.045)" stroke-width="1.5"/><line x1="315.00" y1="30" x2="315.00" y2="270" stroke="rgba(255,255,255,0.045)" stroke-width="1.5"/><line x1="343.75" y1="30" x2="343.75" y2="270" stroke="rgba(255,255,255,0.045)" stroke-width="1.5"/><line x1="372.50" y1="30" x2="372.50" y2="270" stroke="rgba(255,255,255,0.065)" stroke-width="1.5"/><line x1="401.25" y1="30" x2="401.25" y2="270" stroke="rgba(255,255,255,0.045)" stroke-width="1.5"/><line x1="430.00" y1="30" x2="430.00" y2="270" stroke="rgba(255,255,255,0.045)" stroke-width="1.5"/><line x1="458.75" y1="30" x2="458.75" y2="270" stroke="rgba(255,255,255,0.045)" stroke-width="1.5"/><line x1="487.50" y1="30" x2="487.50" y2="270" stroke="rgba(255,255,255,0.065)" stroke-width="1.5"/><line x1="516.25" y1="30" x2="516.25" y2="270" stroke="rgba(255,255,255,0.045)" stroke-width="1.5"/><line x1="545.00" y1="30" x2="545.00" y2="270" stroke="rgba(255,255,255,0.045)" stroke-width="1.5"/><line x1="573.75" y1="30" x2="573.75" y2="270" stroke="rgba(255,255,255,0.045)" stroke-width="1.5"/><line x1="602.50" y1="30" x2="602.50" y2="270" stroke="rgba(255,255,255,0.11)" stroke-width="1.5"/><line x1="631.25" y1="30" x2="631.25" y2="270" stroke="rgba(255,255,255,0.045)" stroke-width="1.5"/><line x1="660.00" y1="30" x2="660.00" y2="270" stroke="rgba(255,255,255,0.045)" stroke-width="1.5"/><line x1="688.75" y1="30" x2="688.75" y2="270" stroke="rgba(255,255,255,0.045)" stroke-width="1.5"/><line x1="717.50" y1="30" x2="717.50" y2="270" stroke="rgba(255,255,255,0.065)" stroke-width="1.5"/><line x1="746.25" y1="30" x2="746.25" y2="270" stroke="rgba(255,255,255,0.045)" stroke-width="1.5"/><line x1="775.00" y1="30" x2="775.00" y2="270" stroke="rgba(255,255,255,0.045)" stroke-width="1.5"/><line x1="803.75" y1="30" x2="803.75" y2="270" stroke="rgba(255,255,255,0.045)" stroke-width="1.5"/><line x1="832.50" y1="30" x2="832.50" y2="270" stroke="rgba(255,255,255,0.065)" stroke-width="1.5"/><line x1="861.25" y1="30" x2="861.25" y2="270" stroke="rgba(255,255,255,0.045)" stroke-width="1.5"/><line x1="890.00" y1="30" x2="890.00" y2="270" stroke="rgba(255,255,255,0.045)" stroke-width="1.5"/><line x1="918.75" y1="30" x2="918.75" y2="270" stroke="rgba(255,255,255,0.045)" stroke-width="1.5"/><line x1="947.50" y1="30" x2="947.50" y2="270" stroke="rgba(255,255,255,0.065)" stroke-width="1.5"/><line x1="976.25" y1="30" x2="976.25" y2="270" stroke="rgba(255,255,255,0.045)" stroke-width="1.5"/><line x1="1005.00" y1="30" x2="1005.00" y2="270" stroke="rgba(255,255,255,0.045)" stroke-width="1.5"/><line x1="1033.75" y1="30" x2="1033.75" y2="270" stroke="rgba(255,255,255,0.045)" stroke-width="1.5"/><line x1="1062.50" y1="30" x2="1062.50" y2="270" stroke="rgba(255,255,255,0.11)" stroke-width="1.5"/><line x1="1091.25" y1="30" x2="1091.25" y2="270" stroke="rgba(255,255,255,0.045)" stroke-width="1.5"/><line x1="1120.00" y1="30" x2="1120.00" y2="270" stroke="rgba(255,255,255,0.045)" stroke-width="1.5"/><line x1="1148.75" y1="30" x2="1148.75" y2="270" stroke="rgba(255,255,255,0.045)" stroke-width="1.5"/></svg>
<div style="position:absolute;left:27px;top:534px;width:1px;height:240px;background:#242424"></div>
<div style="position:absolute;left:56px;top:534px;width:1px;height:240px;background:#242424"></div>
<div style="position:absolute;left:17.00px;top:513.90px;height:20px;line-height:20px;font-size:12.5px;color:#5b5b5d;font-weight:normal;white-space:nowrap;transform:scaleX(0.9372);transform-origin:0.00px 50%;">Local</div>
<div style="position:absolute;left:4.40px;top:539.60px;height:20px;line-height:20px;font-size:12.5px;color:#d8922e;font-weight:normal;white-space:nowrap;transform:scaleX(0.9329);transform-origin:0.00px 50%;">Stroke</div>
<div style="position:absolute;left:4.20px;top:569.90px;height:20px;line-height:20px;font-size:10.5px;color:#c4c4c4;font-weight:normal;white-space:nowrap;transform:scaleX(0.8085);transform-origin:0.00px 50%;">1 (D4:D5)</div>
<div style="position:absolute;left:4.20px;top:599.90px;height:20px;line-height:20px;font-size:10.5px;color:#c4c4c4;font-weight:normal;white-space:nowrap;transform:scaleX(0.8340);transform-origin:0.00px 50%;">2 (A3:A4)</div>
<div style="position:absolute;left:4.20px;top:629.90px;height:20px;line-height:20px;font-size:10.5px;color:#c4c4c4;font-weight:normal;white-space:nowrap;transform:scaleX(0.8356);transform-origin:0.00px 50%;">3 (G3:G4)</div>
<div style="position:absolute;left:4.20px;top:659.90px;height:20px;line-height:20px;font-size:10.5px;color:#c4c4c4;font-weight:normal;white-space:nowrap;transform:scaleX(0.8568);transform-origin:0.00px 50%;">4 (D3:D4)</div>
<div style="position:absolute;left:4.20px;top:689.90px;height:20px;line-height:20px;font-size:10.5px;color:#c4c4c4;font-weight:normal;white-space:nowrap;transform:scaleX(0.8340);transform-origin:0.00px 50%;">5 (A2:A3)</div>
<div style="position:absolute;left:4.20px;top:719.90px;height:20px;line-height:20px;font-size:10.5px;color:#c4c4c4;font-weight:normal;white-space:nowrap;transform:scaleX(0.8568);transform-origin:0.00px 50%;">6 (D2:D3)</div>
<div style="position:absolute;left:4.40px;top:750.10px;height:20px;line-height:20px;font-size:13.5px;color:#6755b5;font-weight:normal;white-space:nowrap;transform:scaleX(0.8045);transform-origin:0.00px 50%;">KS</div>
<div style="position:absolute;left:132.00px;width:20px;text-align:center;top:508.10px;height:20px;line-height:20px;font-size:10.5px;color:#d8d8d8;font-weight:normal;white-space:nowrap;">6</div>
<div style="position:absolute;left:142px;top:529px;width:1.2px;height:5px;background:#f0f0f0"></div>
<div style="position:absolute;left:592.00px;width:20px;text-align:center;top:508.10px;height:20px;line-height:20px;font-size:10.5px;color:#d8d8d8;font-weight:normal;white-space:nowrap;">7</div>
<div style="position:absolute;left:602px;top:529px;width:1.2px;height:5px;background:#f0f0f0"></div>
<div style="position:absolute;left:1052.00px;width:20px;text-align:center;top:508.10px;height:20px;line-height:20px;font-size:10.5px;color:#d8d8d8;font-weight:normal;white-space:nowrap;">8</div>
<div style="position:absolute;left:1062px;top:529px;width:1.2px;height:5px;background:#f0f0f0"></div>
<div style="position:absolute;left:602.5px;top:535.8px;width:459.5px;height:26.8px;background:#c8864f;border-radius:4px"></div>
<div style="position:absolute;left:141px;top:534.6px;width:461.5px;height:28.6px;background:#d39a69;border-radius:4px 2px 2px 4px;box-sizing:border-box;border:2px solid #fff;border-right:1px solid #e8d0c0"></div>
<svg style="position:absolute;left:0;top:504px" width="1151" height="270"><line x1="142.5" y1="31" x2="142.5" y2="270" stroke="#cc4242" stroke-width="0.85" stroke-dasharray="1.6,1.6"/><line x1="1062.5" y1="31" x2="1062.5" y2="270" stroke="#cc4242" stroke-width="0.85" stroke-dasharray="1.6,1.6"/></svg>
<div style="position:absolute;left:487px;top:595.8px;width:115px;height:26.3px;background:#5591d5;border-radius:3.5px"></div>
<div style="position:absolute;left:524.50px;width:40px;text-align:center;top:600.20px;height:20px;line-height:20px;font-size:12.5px;color:#e6edf7;font-weight:normal;white-space:nowrap;">2</div>
<div style="position:absolute;left:679px;top:595.8px;width:76px;height:26.3px;background:#5591d5;border-radius:3.5px"></div>
<div style="position:absolute;left:697.00px;width:40px;text-align:center;top:600.20px;height:20px;line-height:20px;font-size:12.5px;color:#e6edf7;font-weight:normal;white-space:nowrap;">2</div>
<div style="position:absolute;left:870px;top:595.8px;width:192px;height:26.3px;background:#5591d5;border-radius:3.5px"></div>
<div style="position:absolute;left:946.00px;width:40px;text-align:center;top:600.20px;height:20px;line-height:20px;font-size:12.5px;color:#e6edf7;font-weight:normal;white-space:nowrap;">2</div>
<div style="position:absolute;left:180px;top:625.8px;width:76.5px;height:26.3px;background:#5591d5;border-radius:3.5px"></div>
<div style="position:absolute;left:198.25px;width:40px;text-align:center;top:630.20px;height:20px;line-height:20px;font-size:12.5px;color:#e6edf7;font-weight:normal;white-space:nowrap;">3</div>
<div style="position:absolute;left:257.5px;top:625.8px;width:76.0px;height:26.3px;background:#5591d5;border-radius:3.5px"></div>
<div style="position:absolute;left:275.50px;width:40px;text-align:center;top:630.20px;height:20px;line-height:20px;font-size:12.5px;color:#e6edf7;font-weight:normal;white-space:nowrap;">3</div>
<div style="position:absolute;left:334.5px;top:625.8px;width:75.0px;height:26.3px;background:#5591d5;border-radius:3.5px"></div>
<div style="position:absolute;left:352.00px;width:40px;text-align:center;top:630.20px;height:20px;line-height:20px;font-size:12.5px;color:#e6edf7;font-weight:normal;white-space:nowrap;">3</div>
<div style="position:absolute;left:410.5px;top:625.8px;width:76.5px;height:26.3px;background:#5591d5;border-radius:3.5px"></div>
<div style="position:absolute;left:428.75px;width:40px;text-align:center;top:630.20px;height:20px;line-height:20px;font-size:12.5px;color:#e6edf7;font-weight:normal;white-space:nowrap;">3</div>
<div style="position:absolute;left:525px;top:625.8px;width:115px;height:26.3px;background:#5591d5;border-radius:3.5px"></div>
<div style="position:absolute;left:562.50px;width:40px;text-align:center;top:630.20px;height:20px;line-height:20px;font-size:12.5px;color:#e6edf7;font-weight:normal;white-space:nowrap;">3</div>
<div style="position:absolute;left:717px;top:625.8px;width:76px;height:26.3px;background:#5591d5;border-radius:3.5px"></div>
<div style="position:absolute;left:735.00px;width:40px;text-align:center;top:630.20px;height:20px;line-height:20px;font-size:12.5px;color:#e6edf7;font-weight:normal;white-space:nowrap;">3</div>
<div style="position:absolute;left:794px;top:625.8px;width:152px;height:26.3px;background:#5591d5;border-radius:3.5px"></div>
<div style="position:absolute;left:850.00px;width:40px;text-align:center;top:630.20px;height:20px;line-height:20px;font-size:12.5px;color:#e6edf7;font-weight:normal;white-space:nowrap;">3</div>
<div style="position:absolute;left:947px;top:625.8px;width:115px;height:26.3px;background:#5591d5;border-radius:3.5px"></div>
<div style="position:absolute;left:984.50px;width:40px;text-align:center;top:630.20px;height:20px;line-height:20px;font-size:12.5px;color:#e6edf7;font-weight:normal;white-space:nowrap;">3</div>
<div style="position:absolute;left:449px;top:655.8px;width:114.5px;height:26.3px;background:#5591d5;border-radius:3.5px"></div>
<div style="position:absolute;left:486.25px;width:40px;text-align:center;top:660.20px;height:20px;line-height:20px;font-size:12.5px;color:#e6edf7;font-weight:normal;white-space:nowrap;">4</div>
<div style="position:absolute;left:564.5px;top:655.8px;width:266.5px;height:26.3px;background:#5591d5;border-radius:3.5px"></div>
<div style="position:absolute;left:677.75px;width:40px;text-align:center;top:660.20px;height:20px;line-height:20px;font-size:12.5px;color:#e6edf7;font-weight:normal;white-space:nowrap;">4</div>
<div style="position:absolute;left:832px;top:655.8px;width:77px;height:26.3px;background:#5591d5;border-radius:3.5px"></div>
<div style="position:absolute;left:850.50px;width:40px;text-align:center;top:660.20px;height:20px;line-height:20px;font-size:12.5px;color:#e6edf7;font-weight:normal;white-space:nowrap;">4</div>
<div style="position:absolute;left:985px;top:655.8px;width:77px;height:26.3px;background:#5591d5;border-radius:3.5px"></div>
<div style="position:absolute;left:1003.50px;width:40px;text-align:center;top:660.20px;height:20px;line-height:20px;font-size:12.5px;color:#e6edf7;font-weight:normal;white-space:nowrap;">4</div>
<div style="position:absolute;left:909px;top:685.8px;width:153px;height:26.3px;background:#5591d5;border-radius:3.5px"></div>
<div style="position:absolute;left:965.50px;width:40px;text-align:center;top:690.20px;height:20px;line-height:20px;font-size:12.5px;color:#e6edf7;font-weight:normal;white-space:nowrap;">5</div>
<div style="position:absolute;left:142px;top:746px;width:29px;height:26px;background:#7d4bc0;border-radius:2px"></div>
<div style="position:absolute;left:136.50px;width:40px;text-align:center;top:750.10px;height:20px;line-height:20px;font-size:13px;color:#e6def5;font-weight:normal;white-space:nowrap;">C2</div>
<div style="position:absolute;left:9px;top:782px;width:1134px;height:9px;background:#4b82f0;border-radius:4.5px"></div>
<div style="position:absolute;left:0px;top:905px;width:14px;height:20px;background:#18181b"></div>
<div style="position:absolute;left:1px;top:795px;width:1150px;height:127px;box-sizing:border-box;background:#212126;border-left:1px solid #2e2e33;border-bottom:1px solid #2e2e33;border-bottom-left-radius:10px"></div>
<div style="position:absolute;left:6px;top:822px;width:90px;height:76px;background:#1b1b1b"></div>
<svg style="position:absolute;left:0;top:815px" width="100" height="60"><path d="M30,33.9 Q40.5,24 51,33.9 L59,27.4 M30,33.9 Q40.5,43.8 51,33.9 L57,39.2" fill="none" stroke="#eee" stroke-width="1.1"/><polyline points="57,39.2 61.8,39.2 64.2,22 69.6,45.2 74.3,25.6 79.4,41.6 84.2,33.3" fill="none" stroke="#eee" stroke-width="1.1" stroke-linejoin="miter"/></svg>
<div style="position:absolute;left:24.70px;top:863.10px;height:20px;line-height:20px;font-size:9.5px;color:#f0f0f0;font-weight:bold;white-space:nowrap;transform:scaleX(0.9400);transform-origin:0.00px 50%;">LIVING FISH</div>
<div style="position:absolute;left:39.80px;top:875.10px;height:20px;line-height:20px;font-size:6.5px;color:#e0e0e0;font-weight:bold;white-space:nowrap;transform:scaleX(0.8954);transform-origin:0.00px 50%;">STUDIO</div>
<div style="position:absolute;left:212px;top:840px;width:60px;height:40px;background:#4b82f0;border-radius:2px"></div>
<div style="position:absolute;left:226.30px;top:851.20px;height:20px;line-height:20px;font-size:16.5px;color:#eef3ff;font-weight:normal;white-space:nowrap;transform:scaleX(0.9048);transform-origin:0.00px 50%;">MIDI</div>
<div style="position:absolute;left:259.5px;top:843.5px;width:9px;height:9px;background:#f2aa2c;border-radius:50%"></div>
<div style="position:absolute;left:858px;top:846px;width:60px;height:28px;box-sizing:border-box;border:1px solid #727980;border-radius:5px;background:#242a30"></div>
<div style="position:absolute;left:838.00px;width:100px;text-align:center;top:850.60px;height:20px;line-height:20px;font-size:14.3px;color:#fff;font-weight:normal;white-space:nowrap;-webkit-text-stroke:0.55px #fff;transform:scaleX(0.8987);transform-origin:50% 50%;">Save</div>
<div style="position:absolute;left:926px;top:846px;width:60px;height:28px;box-sizing:border-box;border:1px solid #727980;border-radius:5px;background:#242a30"></div>
<div style="position:absolute;left:905.91px;width:100px;text-align:center;top:850.60px;height:20px;line-height:20px;font-size:14.3px;color:#fff;font-weight:normal;white-space:nowrap;-webkit-text-stroke:0.55px #fff;letter-spacing:-0.172px;">Load</div>
<div style="position:absolute;left:994px;top:846px;width:65px;height:28px;box-sizing:border-box;border:1px solid #727980;border-radius:5px;background:#242a30"></div>
<div style="position:absolute;left:1000.00px;top:850.60px;height:20px;line-height:20px;font-size:14px;color:#fff;font-weight:normal;white-space:nowrap;-webkit-text-stroke:0.55px #fff;transform:scaleX(0.8500);transform-origin:0.00px 50%;">CH1</div>
<svg style="position:absolute;left:1029.75px;top:855.35px" width="18.5" height="10.5"><polyline points="2,2 9.25,8.5 16.5,2" fill="none" stroke="#fff" stroke-width="1.8" stroke-linecap="round" stroke-linejoin="round"/></svg>
<div style="position:absolute;left:0px;top:922px;width:1151px;height:3px;background:#18181b"></div>
<svg style="position:absolute;left:520px;top:805px" width="112" height="112"><defs><linearGradient id="pg" x1="0" y1="0" x2="0" y2="1"><stop offset="0" stop-color="#6e6158"/><stop offset="1" stop-color="#4a3d34"/></linearGradient></defs><circle cx="56.5" cy="57.0" r="52" fill="#0c0c0e" opacity="0.8"/><circle cx="55.5" cy="55.5" r="51" fill="url(#pg)" stroke="#ededed" stroke-width="2"/><circle cx="55.5" cy="55.5" r="39" fill="none" stroke="#9c9ba4" stroke-width="0.8"/><circle cx="55.5" cy="55.5" r="32" fill="none" stroke="#ededed" stroke-width="2"/><circle cx="55.5" cy="10.5" r="0.7" fill="#eee"/><circle cx="69.4" cy="12.7" r="1.4" fill="#eee"/><circle cx="82.0" cy="19.1" r="0.7" fill="#eee"/><circle cx="91.9" cy="29.0" r="1.4" fill="#eee"/><circle cx="98.3" cy="41.6" r="0.7" fill="#eee"/><circle cx="100.5" cy="55.5" r="1.4" fill="#eee"/><circle cx="98.3" cy="69.4" r="0.7" fill="#eee"/><circle cx="91.9" cy="82.0" r="1.4" fill="#eee"/><circle cx="82.0" cy="91.9" r="0.7" fill="#eee"/><circle cx="69.4" cy="98.3" r="1.4" fill="#eee"/><circle cx="55.5" cy="100.5" r="0.7" fill="#eee"/><circle cx="41.6" cy="98.3" r="1.4" fill="#eee"/><circle cx="29.0" cy="91.9" r="0.7" fill="#eee"/><circle cx="19.1" cy="82.0" r="1.4" fill="#eee"/><circle cx="12.7" cy="69.4" r="0.7" fill="#eee"/><circle cx="10.5" cy="55.5" r="1.4" fill="#eee"/><circle cx="12.7" cy="41.6" r="0.7" fill="#eee"/><circle cx="19.1" cy="29.0" r="1.4" fill="#eee"/><circle cx="29.0" cy="19.1" r="0.7" fill="#eee"/><circle cx="41.6" cy="12.7" r="1.4" fill="#eee"/><path d="M27.5,42.5 C45.5,40.5 65.5,46.5 83.5,43.5" fill="none" stroke="#eee" stroke-width="1.8"/><path d="M27.5,48.5 C45.5,46.5 65.5,52.5 83.5,49.5" fill="none" stroke="#e4e4e4" stroke-width="1.6"/><path d="M27.5,54.5 C45.5,52.5 65.5,58.5 83.5,55.5" fill="none" stroke="#b4b4bc" stroke-width="1.1"/><path d="M27.5,60.5 C45.5,58.5 65.5,64.5 83.5,61.5" fill="none" stroke="#a0a0a8" stroke-width="1.0"/><path d="M27.5,66.5 C45.5,64.5 65.5,70.5 83.5,67.5" fill="none" stroke="#808088" stroke-width="1.0"/><path d="M27.5,72.5 C45.5,70.5 65.5,76.5 83.5,73.5" fill="none" stroke="#707078" stroke-width="0.9"/></svg>
<div style="position:absolute;left:1164.20px;top:10.10px;height:20px;line-height:20px;font-size:12.5px;color:#fff;font-weight:bold;white-space:nowrap;letter-spacing:0.094px;">Inspector</div>
<div style="position:absolute;left:1151px;top:33.5px;width:449px;height:1.2px;background:#2e2e33"></div>
<div style="position:absolute;left:1155px;top:35px;width:425px;height:23px;background:#27272c"></div>
<div style="position:absolute;left:1155px;top:56.5px;width:425px;height:1.5px;background:#303036"></div>
<div style="position:absolute;left:1163.20px;top:36.60px;height:20px;line-height:20px;font-size:10.5px;color:#4a80f0;font-weight:bold;white-space:nowrap;transform:scaleX(0.9490);transform-origin:0.00px 50%;">BASIC SETTINGS</div>
<div style="position:absolute;left:937.44px;width:300px;text-align:right;top:68.00px;height:20px;line-height:20px;font-size:10px;color:#a9a9ae;font-weight:normal;white-space:nowrap;-webkit-text-stroke:0.25px #a9a9ae;letter-spacing:-0.158px;">Relative Beat:</div>
<div style="position:absolute;left:1260.06px;width:300px;text-align:center;top:68.30px;height:20px;line-height:20px;font-size:10px;color:#3fdde0;font-weight:normal;white-space:nowrap;-webkit-text-stroke:0.25px #3fdde0;letter-spacing:0.117px;">0.00</div>
<div style="position:absolute;left:937.59px;width:300px;text-align:right;top:100.20px;height:20px;line-height:20px;font-size:10px;color:#a9a9ae;font-weight:normal;white-space:nowrap;-webkit-text-stroke:0.25px #a9a9ae;letter-spacing:-0.013px;">Type:</div>
<div style="position:absolute;left:1260.00px;width:300px;text-align:center;top:100.20px;height:20px;line-height:20px;font-size:10px;color:#3fdde0;font-weight:normal;white-space:nowrap;-webkit-text-stroke:0.25px #3fdde0;letter-spacing:0.008px;">Stroke (All Strings)</div>
<div style="position:absolute;left:937.36px;width:300px;text-align:right;top:132.10px;height:20px;line-height:20px;font-size:10px;color:#a9a9ae;font-weight:normal;white-space:nowrap;-webkit-text-stroke:0.25px #a9a9ae;letter-spacing:-0.242px;">Anchor:</div>
<div style="position:absolute;left:1247px;top:127px;width:326px;height:27.5px;box-sizing:border-box;border:1px solid #46474c;border-radius:4px;background:#35363b"></div>
<div style="position:absolute;left:1253.50px;top:132.10px;height:20px;line-height:20px;font-size:14px;color:#fff;font-weight:normal;white-space:nowrap;-webkit-text-stroke:0.35px #fff;letter-spacing:0.077px;">6 – Low E (6th)</div>
<svg style="position:absolute;left:1544.0px;top:136.55px" width="18" height="10.5"><polyline points="2,2 9.0,8.5 16,2" fill="none" stroke="#a8a8a8" stroke-width="1.7" stroke-linecap="round" stroke-linejoin="round"/></svg>
<div style="position:absolute;left:937.51px;width:300px;text-align:right;top:164.10px;height:20px;line-height:20px;font-size:10px;color:#a9a9ae;font-weight:normal;white-space:nowrap;-webkit-text-stroke:0.25px #a9a9ae;letter-spacing:0.112px;">Anchor Offset:</div>
<div style="position:absolute;left:1256px;top:170.0px;width:258px;height:6px;background:#35363c;border-radius:3.0px"></div>
<div style="position:absolute;left:1256px;top:170.0px;width:129px;height:6px;background:#4a80f0;border-radius:3.0px"></div>
<div style="position:absolute;left:1378.8px;top:166.8px;width:12.4px;height:12.4px;border-radius:50%;background:#fff;box-shadow:0 0 1.5px rgba(0,0,0,.6)"></div>
<div style="position:absolute;left:1537.50px;width:20px;text-align:center;top:164.10px;height:20px;line-height:20px;font-size:14px;color:#fff;font-weight:normal;white-space:nowrap;-webkit-text-stroke:0.35px #fff;">0</div>
<div style="position:absolute;left:937.46px;width:300px;text-align:right;top:195.60px;height:20px;line-height:20px;font-size:10px;color:#a9a9ae;font-weight:normal;white-space:nowrap;-webkit-text-stroke:0.25px #a9a9ae;letter-spacing:0.058px;">Ignore:</div>
<div style="position:absolute;left:1250.5px;top:196.3px;width:17.5px;height:17.19999999999999px;box-sizing:border-box;border:1.5px solid #78787d;border-radius:4px;background:transparent"></div>
<div style="position:absolute;left:1267.30px;width:20px;text-align:center;top:195.60px;height:20px;line-height:20px;font-size:13.5px;color:#f2f2f2;font-weight:normal;white-space:nowrap;-webkit-text-stroke:0.35px #f2f2f2;">1</div>
<div style="position:absolute;left:1304.5px;top:196.3px;width:17.5px;height:17.19999999999999px;box-sizing:border-box;border:1.5px solid #78787d;border-radius:4px;background:transparent"></div>
<div style="position:absolute;left:1321.30px;width:20px;text-align:center;top:195.60px;height:20px;line-height:20px;font-size:13.5px;color:#f2f2f2;font-weight:normal;white-space:nowrap;-webkit-text-stroke:0.35px #f2f2f2;">2</div>
<div style="position:absolute;left:1358.5px;top:196.3px;width:17.5px;height:17.19999999999999px;box-sizing:border-box;border:1.5px solid #78787d;border-radius:4px;background:transparent"></div>
<svg style="position:absolute;left:1358.5px;top:196.3px" width="17.5" height="17.5"><polyline points="5.2,8.8 7.7,11.2 12.2,6.0" fill="none" stroke="#fff" stroke-width="1.7" stroke-linecap="round" stroke-linejoin="round"/></svg>
<div style="position:absolute;left:1375.30px;width:20px;text-align:center;top:195.60px;height:20px;line-height:20px;font-size:13.5px;color:#f2f2f2;font-weight:normal;white-space:nowrap;-webkit-text-stroke:0.35px #f2f2f2;">3</div>
<div style="position:absolute;left:1412.5px;top:196.3px;width:17.5px;height:17.19999999999999px;box-sizing:border-box;border:1.5px solid #78787d;border-radius:4px;background:transparent"></div>
<div style="position:absolute;left:1429.30px;width:20px;text-align:center;top:195.60px;height:20px;line-height:20px;font-size:13.5px;color:#f2f2f2;font-weight:normal;white-space:nowrap;-webkit-text-stroke:0.35px #f2f2f2;">4</div>
<div style="position:absolute;left:1466.5px;top:196.3px;width:17.5px;height:17.19999999999999px;box-sizing:border-box;border:1.5px solid #78787d;border-radius:4px;background:transparent"></div>
<div style="position:absolute;left:1483.30px;width:20px;text-align:center;top:195.60px;height:20px;line-height:20px;font-size:13.5px;color:#f2f2f2;font-weight:normal;white-space:nowrap;-webkit-text-stroke:0.35px #f2f2f2;">5</div>
<div style="position:absolute;left:1520.5px;top:196.3px;width:17.5px;height:17.19999999999999px;box-sizing:border-box;border:1.5px solid #78787d;border-radius:4px;background:transparent"></div>
<div style="position:absolute;left:1537.30px;width:20px;text-align:center;top:195.60px;height:20px;line-height:20px;font-size:13.5px;color:#f2f2f2;font-weight:normal;white-space:nowrap;-webkit-text-stroke:0.35px #f2f2f2;">6</div>
<div style="position:absolute;left:1155px;top:235px;width:425px;height:23px;background:#27272c"></div>
<div style="position:absolute;left:1155px;top:256.5px;width:425px;height:1.5px;background:#303036"></div>
<div style="position:absolute;left:1163.20px;top:236.60px;height:20px;line-height:20px;font-size:10.5px;color:#4a80f0;font-weight:bold;white-space:nowrap;letter-spacing:-0.075px;">STRING OFFSETS (TIMING)</div>
<div style="position:absolute;left:1155px;top:263.3px;width:211px;height:27.30000000000001px;box-sizing:border-box;border:1px solid #7a8084;border-radius:5px;background:#36363c"></div>
<div style="position:absolute;left:1135.01px;width:251px;text-align:center;top:267.80px;height:20px;line-height:20px;font-size:14.3px;color:#fff;font-weight:normal;white-space:nowrap;-webkit-text-stroke:0.55px #fff;letter-spacing:0.021px;">Down</div>
<div style="position:absolute;left:1370px;top:263.3px;width:211px;height:27.30000000000001px;box-sizing:border-box;border:1px solid #7a8084;border-radius:5px;background:#36363c"></div>
<div style="position:absolute;left:1350.10px;width:251px;text-align:center;top:267.80px;height:20px;line-height:20px;font-size:14.3px;color:#fff;font-weight:normal;white-space:nowrap;-webkit-text-stroke:0.55px #fff;letter-spacing:0.196px;">Up</div>
<div style="position:absolute;left:1155.0px;top:295.5px;width:102.70000000000005px;height:27.0px;box-sizing:border-box;border:1px solid #7a8084;border-radius:5px;background:#36363c"></div>
<div style="position:absolute;left:1134.97px;width:142.70000000000005px;text-align:center;top:299.80px;height:20px;line-height:20px;font-size:14.3px;color:#fff;font-weight:normal;white-space:nowrap;-webkit-text-stroke:0.55px #fff;letter-spacing:-0.062px;">Simul</div>
<div style="position:absolute;left:1262.3px;top:295.5px;width:102.70000000000005px;height:27.0px;box-sizing:border-box;border:1px solid #7a8084;border-radius:5px;background:#36363c"></div>
<div style="position:absolute;left:1242.31px;width:142.70000000000005px;text-align:center;top:299.80px;height:20px;line-height:20px;font-size:14.3px;color:#fff;font-weight:normal;white-space:nowrap;-webkit-text-stroke:0.55px #fff;letter-spacing:0.029px;">Linear</div>
<div style="position:absolute;left:1369.6px;top:295.5px;width:102.70000000000005px;height:27.0px;box-sizing:border-box;border:1px solid #7a8084;border-radius:5px;background:#36363c"></div>
<div style="position:absolute;left:1349.48px;width:142.70000000000005px;text-align:center;top:299.80px;height:20px;line-height:20px;font-size:14.3px;color:#fff;font-weight:normal;white-space:nowrap;-webkit-text-stroke:0.55px #fff;letter-spacing:-0.241px;">Accel</div>
<div style="position:absolute;left:1476.9px;top:295.5px;width:102.70000000000005px;height:27.0px;box-sizing:border-box;border:1px solid #7a8084;border-radius:5px;background:#36363c"></div>
<div style="position:absolute;left:1456.80px;width:142.70000000000005px;text-align:center;top:299.80px;height:20px;line-height:20px;font-size:14.3px;color:#fff;font-weight:normal;white-space:nowrap;-webkit-text-stroke:0.55px #fff;letter-spacing:-0.209px;">Decel</div>
<div style="position:absolute;left:1164px;top:336.0px;width:357.5999999999999px;height:6px;background:#35363c;border-radius:3.0px"></div>
<div style="position:absolute;left:1164px;top:336.0px;width:169.79999999999995px;height:6px;background:#4a80f0;border-radius:3.0px"></div>
<div style="position:absolute;left:1327.6px;top:332.8px;width:12.4px;height:12.4px;border-radius:50%;background:#fff;box-shadow:0 0 1.5px rgba(0,0,0,.6)"></div>
<div style="position:absolute;left:1269.53px;width:300px;text-align:right;top:329.60px;height:20px;line-height:20px;font-size:13.5px;color:#fff;font-weight:normal;white-space:nowrap;-webkit-text-stroke:0.35px #fff;letter-spacing:0.228px;">1.0x</div>
<div style="position:absolute;left:1165.50px;width:20px;text-align:center;top:357.90px;height:20px;line-height:20px;font-size:14px;color:#b5b5b8;font-weight:normal;white-space:nowrap;">1</div>
<div style="position:absolute;left:1196.3px;top:364.3px;width:325.29999999999995px;height:6px;background:#35363c;border-radius:3.0px"></div>
<div style="position:absolute;left:1196.3px;top:364.3px;width:198.70000000000005px;height:6px;background:#4a80f0;border-radius:3.0px"></div>
<div style="position:absolute;left:1388.8px;top:361.1px;width:12.4px;height:12.4px;border-radius:50%;background:#fff;box-shadow:0 0 1.5px rgba(0,0,0,.6)"></div>
<div style="position:absolute;left:1536.57px;width:40px;text-align:center;top:357.90px;height:20px;line-height:20px;font-size:13.5px;color:#fff;font-weight:normal;white-space:nowrap;-webkit-text-stroke:0.35px #fff;letter-spacing:1.140px;">111</div>
<div style="position:absolute;left:1165.50px;width:20px;text-align:center;top:385.90px;height:20px;line-height:20px;font-size:14px;color:#b5b5b8;font-weight:normal;white-space:nowrap;">2</div>
<div style="position:absolute;left:1196.3px;top:392.3px;width:325.29999999999995px;height:6px;background:#35363c;border-radius:3.0px"></div>
<div style="position:absolute;left:1196.3px;top:392.3px;width:197.70000000000005px;height:6px;background:#4a80f0;border-radius:3.0px"></div>
<div style="position:absolute;left:1387.8px;top:389.1px;width:12.4px;height:12.4px;border-radius:50%;background:#fff;box-shadow:0 0 1.5px rgba(0,0,0,.6)"></div>
<div style="position:absolute;left:1536.06px;width:40px;text-align:center;top:385.90px;height:20px;line-height:20px;font-size:13.5px;color:#fff;font-weight:normal;white-space:nowrap;-webkit-text-stroke:0.35px #fff;letter-spacing:0.127px;">107</div>
<div style="position:absolute;left:1165.50px;width:20px;text-align:center;top:413.90px;height:20px;line-height:20px;font-size:14px;color:#b5b5b8;font-weight:normal;white-space:nowrap;">3</div>
<div style="position:absolute;left:1196.3px;top:420.3px;width:325.29999999999995px;height:6px;background:#35363c;border-radius:3.0px"></div>
<div style="position:absolute;left:1196.3px;top:420.3px;width:186.70000000000005px;height:6px;background:#4a80f0;border-radius:3.0px"></div>
<div style="position:absolute;left:1376.8px;top:417.1px;width:12.4px;height:12.4px;border-radius:50%;background:#fff;box-shadow:0 0 1.5px rgba(0,0,0,.6)"></div>
<div style="position:absolute;left:1536.01px;width:40px;text-align:center;top:413.90px;height:20px;line-height:20px;font-size:13.5px;color:#fff;font-weight:normal;white-space:nowrap;-webkit-text-stroke:0.35px #fff;letter-spacing:0.015px;">75</div>
<div style="position:absolute;left:1165.50px;width:20px;text-align:center;top:441.90px;height:20px;line-height:20px;font-size:14px;color:#b5b5b8;font-weight:normal;white-space:nowrap;">4</div>
<div style="position:absolute;left:1196.3px;top:448.3px;width:325.29999999999995px;height:6px;background:#35363c;border-radius:3.0px"></div>
<div style="position:absolute;left:1196.3px;top:448.3px;width:176.70000000000005px;height:6px;background:#4a80f0;border-radius:3.0px"></div>
<div style="position:absolute;left:1366.8px;top:445.1px;width:12.4px;height:12.4px;border-radius:50%;background:#fff;box-shadow:0 0 1.5px rgba(0,0,0,.6)"></div>
<div style="position:absolute;left:1536.01px;width:40px;text-align:center;top:441.90px;height:20px;line-height:20px;font-size:13.5px;color:#fff;font-weight:normal;white-space:nowrap;-webkit-text-stroke:0.35px #fff;letter-spacing:0.015px;">46</div>
<div style="position:absolute;left:1165.50px;width:20px;text-align:center;top:469.90px;height:20px;line-height:20px;font-size:14px;color:#b5b5b8;font-weight:normal;white-space:nowrap;">5</div>
<div style="position:absolute;left:1196.3px;top:476.3px;width:325.29999999999995px;height:6px;background:#35363c;border-radius:3.0px"></div>
<div style="position:absolute;left:1196.3px;top:476.3px;width:172.70000000000005px;height:6px;background:#4a80f0;border-radius:3.0px"></div>
<div style="position:absolute;left:1362.8px;top:473.1px;width:12.4px;height:12.4px;border-radius:50%;background:#fff;box-shadow:0 0 1.5px rgba(0,0,0,.6)"></div>
<div style="position:absolute;left:1536.01px;width:40px;text-align:center;top:469.90px;height:20px;line-height:20px;font-size:13.5px;color:#fff;font-weight:normal;white-space:nowrap;-webkit-text-stroke:0.35px #fff;letter-spacing:0.015px;">34</div>
<div style="position:absolute;left:1165.50px;width:20px;text-align:center;top:497.90px;height:20px;line-height:20px;font-size:14px;color:#b5b5b8;font-weight:normal;white-space:nowrap;">6</div>
<div style="position:absolute;left:1196.3px;top:504.3px;width:325.29999999999995px;height:6px;background:#35363c;border-radius:3.0px"></div>
<div style="position:absolute;left:1196.3px;top:504.3px;width:161.70000000000005px;height:6px;background:#4a80f0;border-radius:3.0px"></div>
<div style="position:absolute;left:1351.8px;top:501.1px;width:12.4px;height:12.4px;border-radius:50%;background:#fff;box-shadow:0 0 1.5px rgba(0,0,0,.6)"></div>
<div style="position:absolute;left:1536.00px;width:40px;text-align:center;top:497.90px;height:20px;line-height:20px;font-size:13.5px;color:#fff;font-weight:normal;white-space:nowrap;-webkit-text-stroke:0.35px #fff;">0</div>
<div style="position:absolute;left:1155px;top:531.5px;width:425px;height:22.5px;background:#27272c"></div>
<div style="position:absolute;left:1155px;top:552.5px;width:425px;height:1.5px;background:#303036"></div>
<div style="position:absolute;left:1163.20px;top:532.85px;height:20px;line-height:20px;font-size:10.5px;color:#4a80f0;font-weight:bold;white-space:nowrap;letter-spacing:-0.156px;">STRING VELOCITIES</div>
<div style="position:absolute;left:1155px;top:559.6px;width:211px;height:27.0px;box-sizing:border-box;border:1px solid #7a8084;border-radius:5px;background:#36363c"></div>
<div style="position:absolute;left:1135.01px;width:251px;text-align:center;top:563.80px;height:20px;line-height:20px;font-size:14.3px;color:#fff;font-weight:normal;white-space:nowrap;-webkit-text-stroke:0.55px #fff;letter-spacing:0.021px;">Down</div>
<div style="position:absolute;left:1370px;top:559.6px;width:211px;height:27.0px;box-sizing:border-box;border:1px solid #7a8084;border-radius:5px;background:#36363c"></div>
<div style="position:absolute;left:1350.10px;width:251px;text-align:center;top:563.80px;height:20px;line-height:20px;font-size:14.3px;color:#fff;font-weight:normal;white-space:nowrap;-webkit-text-stroke:0.55px #fff;letter-spacing:0.196px;">Up</div>
<div style="position:absolute;left:1199.2px;top:600.0px;width:288.0999999999999px;height:6px;background:#35363c;border-radius:3.0px"></div>
<div style="position:absolute;left:1199.2px;top:600.0px;width:144.79999999999995px;height:6px;background:#4a80f0;border-radius:3.0px"></div>
<div style="position:absolute;left:1337.8px;top:596.8px;width:12.4px;height:12.4px;border-radius:50%;background:#fff;box-shadow:0 0 1.5px rgba(0,0,0,.6)"></div>
<div style="position:absolute;left:1506.50px;width:30px;text-align:center;top:593.90px;height:20px;line-height:20px;font-size:13.5px;color:#fff;font-weight:normal;white-space:nowrap;-webkit-text-stroke:0.35px #fff;">64</div>
<div style="position:absolute;left:1551px;top:591px;width:30px;height:24px;box-sizing:border-box;border:1px solid #75777b;border-radius:5px;background:#36363c"></div>
<div style="position:absolute;left:1531.00px;width:70px;text-align:center;top:593.90px;height:20px;line-height:20px;font-size:13.8px;color:#fff;font-weight:normal;white-space:nowrap;-webkit-text-stroke:0.55px #fff;letter-spacing:0.000px;">=</div>
<div style="position:absolute;left:1169.40px;width:40px;text-align:center;top:621.80px;height:20px;line-height:20px;font-size:14px;color:#a9a9ae;font-weight:normal;white-space:nowrap;-webkit-text-stroke:0.1px #a9a9ae;letter-spacing:0.603px;">Diff</div>
<div style="position:absolute;left:1214.1px;top:628.0px;width:273.20000000000005px;height:6px;background:#35363c;border-radius:3.0px"></div>
<div style="position:absolute;left:1214.1px;top:628.0px;width:47.600000000000136px;height:6px;background:#4a80f0;border-radius:3.0px"></div>
<div style="position:absolute;left:1255.5px;top:624.8px;width:12.4px;height:12.4px;border-radius:50%;background:#fff;box-shadow:0 0 1.5px rgba(0,0,0,.6)"></div>
<div style="position:absolute;left:1506.50px;width:30px;text-align:center;top:621.80px;height:20px;line-height:20px;font-size:13.5px;color:#fff;font-weight:normal;white-space:nowrap;-webkit-text-stroke:0.35px #fff;">5</div>
<div style="position:absolute;left:1551px;top:619.2px;width:30px;height:23.799999999999955px;box-sizing:border-box;border:1px solid #75777b;border-radius:5px;background:#36363c"></div>
<div style="position:absolute;left:1546.00px;width:40px;text-align:center;top:622.10px;height:20px;line-height:20px;font-size:11.5px;color:#fff;font-weight:normal;white-space:nowrap;transform:scaleX(0.82);-webkit-text-stroke:0.3px #fff;">Set</div>
<div style="position:absolute;left:1165.50px;width:20px;text-align:center;top:649.90px;height:20px;line-height:20px;font-size:14px;color:#b5b5b8;font-weight:normal;white-space:nowrap;">1</div>
<div style="position:absolute;left:1196.3px;top:656.3px;width:325.29999999999995px;height:6px;background:#35363c;border-radius:3.0px"></div>
<div style="position:absolute;left:1196.3px;top:656.3px;width:100.70000000000005px;height:6px;background:#4a80f0;border-radius:3.0px"></div>
<div style="position:absolute;left:1290.8px;top:653.1px;width:12.4px;height:12.4px;border-radius:50%;background:#fff;box-shadow:0 0 1.5px rgba(0,0,0,.6)"></div>
<div style="position:absolute;left:1536.01px;width:40px;text-align:center;top:649.90px;height:20px;line-height:20px;font-size:13.5px;color:#fff;font-weight:normal;white-space:nowrap;-webkit-text-stroke:0.35px #fff;letter-spacing:0.015px;">39</div>
<div style="position:absolute;left:1165.50px;width:20px;text-align:center;top:677.90px;height:20px;line-height:20px;font-size:14px;color:#b5b5b8;font-weight:normal;white-space:nowrap;">2</div>
<div style="position:absolute;left:1196.3px;top:684.3px;width:325.29999999999995px;height:6px;background:#35363c;border-radius:3.0px"></div>
<div style="position:absolute;left:1196.3px;top:684.3px;width:113.70000000000005px;height:6px;background:#4a80f0;border-radius:3.0px"></div>
<div style="position:absolute;left:1303.8px;top:681.1px;width:12.4px;height:12.4px;border-radius:50%;background:#fff;box-shadow:0 0 1.5px rgba(0,0,0,.6)"></div>
<div style="position:absolute;left:1536.01px;width:40px;text-align:center;top:677.90px;height:20px;line-height:20px;font-size:13.5px;color:#fff;font-weight:normal;white-space:nowrap;-webkit-text-stroke:0.35px #fff;letter-spacing:0.015px;">44</div>
<div style="position:absolute;left:1165.50px;width:20px;text-align:center;top:705.90px;height:20px;line-height:20px;font-size:14px;color:#b5b5b8;font-weight:normal;white-space:nowrap;">3</div>
<div style="position:absolute;left:1196.3px;top:712.3px;width:325.29999999999995px;height:6px;background:#35363c;border-radius:3.0px"></div>
<div style="position:absolute;left:1196.3px;top:712.3px;width:125.70000000000005px;height:6px;background:#4a80f0;border-radius:3.0px"></div>
<div style="position:absolute;left:1315.8px;top:709.1px;width:12.4px;height:12.4px;border-radius:50%;background:#fff;box-shadow:0 0 1.5px rgba(0,0,0,.6)"></div>
<div style="position:absolute;left:1536.01px;width:40px;text-align:center;top:705.90px;height:20px;line-height:20px;font-size:13.5px;color:#fff;font-weight:normal;white-space:nowrap;-webkit-text-stroke:0.35px #fff;letter-spacing:0.015px;">49</div>
<div style="position:absolute;left:1165.50px;width:20px;text-align:center;top:733.90px;height:20px;line-height:20px;font-size:14px;color:#b5b5b8;font-weight:normal;white-space:nowrap;">4</div>
<div style="position:absolute;left:1196.3px;top:740.3px;width:325.29999999999995px;height:6px;background:#35363c;border-radius:3.0px"></div>
<div style="position:absolute;left:1196.3px;top:740.3px;width:138.70000000000005px;height:6px;background:#4a80f0;border-radius:3.0px"></div>
<div style="position:absolute;left:1328.8px;top:737.1px;width:12.4px;height:12.4px;border-radius:50%;background:#fff;box-shadow:0 0 1.5px rgba(0,0,0,.6)"></div>
<div style="position:absolute;left:1536.01px;width:40px;text-align:center;top:733.90px;height:20px;line-height:20px;font-size:13.5px;color:#fff;font-weight:normal;white-space:nowrap;-webkit-text-stroke:0.35px #fff;letter-spacing:0.015px;">54</div>
<div style="position:absolute;left:1165.50px;width:20px;text-align:center;top:761.90px;height:20px;line-height:20px;font-size:14px;color:#b5b5b8;font-weight:normal;white-space:nowrap;">5</div>
<div style="position:absolute;left:1196.3px;top:768.3px;width:325.29999999999995px;height:6px;background:#35363c;border-radius:3.0px"></div>
<div style="position:absolute;left:1196.3px;top:768.3px;width:150.70000000000005px;height:6px;background:#4a80f0;border-radius:3.0px"></div>
<div style="position:absolute;left:1340.8px;top:765.1px;width:12.4px;height:12.4px;border-radius:50%;background:#fff;box-shadow:0 0 1.5px rgba(0,0,0,.6)"></div>
<div style="position:absolute;left:1536.01px;width:40px;text-align:center;top:761.90px;height:20px;line-height:20px;font-size:13.5px;color:#fff;font-weight:normal;white-space:nowrap;-webkit-text-stroke:0.35px #fff;letter-spacing:0.015px;">59</div>
<div style="position:absolute;left:1165.50px;width:20px;text-align:center;top:789.90px;height:20px;line-height:20px;font-size:14px;color:#b5b5b8;font-weight:normal;white-space:nowrap;">6</div>
<div style="position:absolute;left:1196.3px;top:796.3px;width:325.29999999999995px;height:6px;background:#35363c;border-radius:3.0px"></div>
<div style="position:absolute;left:1196.3px;top:796.3px;width:163.70000000000005px;height:6px;background:#4a80f0;border-radius:3.0px"></div>
<div style="position:absolute;left:1353.8px;top:793.1px;width:12.4px;height:12.4px;border-radius:50%;background:#fff;box-shadow:0 0 1.5px rgba(0,0,0,.6)"></div>
<div style="position:absolute;left:1536.01px;width:40px;text-align:center;top:789.90px;height:20px;line-height:20px;font-size:13.5px;color:#fff;font-weight:normal;white-space:nowrap;-webkit-text-stroke:0.35px #fff;letter-spacing:0.015px;">64</div>
<div style="position:absolute;left:1155px;top:823.4px;width:425px;height:22.899999999999977px;background:#27272c"></div>
<div style="position:absolute;left:1155px;top:844.8px;width:425px;height:1.5px;background:#303036"></div>
<div style="position:absolute;left:1163.20px;top:824.95px;height:20px;line-height:20px;font-size:10.5px;color:#4a80f0;font-weight:bold;white-space:nowrap;letter-spacing:-0.021px;">STRING DURATIONS</div>
<div style="position:absolute;left:1195.20px;top:853.90px;height:20px;line-height:20px;font-size:10px;color:#ededed;font-weight:bold;white-space:nowrap;letter-spacing:-0.117px;">4.00 beats</div>
<div style="position:absolute;left:1551px;top:851.2px;width:30px;height:23.799999999999955px;box-sizing:border-box;border:1px solid #75777b;border-radius:5px;background:#36363c"></div>
<div style="position:absolute;left:1531.00px;width:70px;text-align:center;top:853.90px;height:20px;line-height:20px;font-size:13.8px;color:#fff;font-weight:normal;white-space:nowrap;-webkit-text-stroke:0.55px #fff;letter-spacing:0.000px;">=</div>
<div style="position:absolute;left:1149.90px;width:60px;text-align:center;top:882.00px;height:20px;line-height:20px;font-size:12.5px;color:#a9a9ae;font-weight:normal;white-space:nowrap;transform:scaleX(0.8);-webkit-text-stroke:0.15px #a9a9ae;">Random</div>
<div style="position:absolute;left:1214.1px;top:888.0px;width:273.20000000000005px;height:6px;background:#35363c;border-radius:3.0px"></div>
<div style="position:absolute;left:1214.1px;top:888.0px;width:56.40000000000009px;height:6px;background:#4a80f0;border-radius:3.0px"></div>
<div style="position:absolute;left:1264.3px;top:884.8px;width:12.4px;height:12.4px;border-radius:50%;background:#fff;box-shadow:0 0 1.5px rgba(0,0,0,.6)"></div>
<div style="position:absolute;left:1507.00px;width:30px;text-align:center;top:881.80px;height:20px;line-height:20px;font-size:13.5px;color:#fff;font-weight:normal;white-space:nowrap;-webkit-text-stroke:0.35px #fff;">10</div>
<div style="position:absolute;left:1551px;top:879px;width:30px;height:24px;box-sizing:border-box;border:1px solid #75777b;border-radius:5px;background:#36363c"></div>
<div style="position:absolute;left:1546.00px;width:40px;text-align:center;top:882.10px;height:20px;line-height:20px;font-size:11.5px;color:#fff;font-weight:normal;white-space:nowrap;transform:scaleX(0.82);-webkit-text-stroke:0.3px #fff;">Set</div>
<div style="position:absolute;left:1165.50px;width:20px;text-align:center;top:909.90px;height:20px;line-height:20px;font-size:14px;color:#b5b5b8;font-weight:normal;white-space:nowrap;">1</div>
<div style="position:absolute;left:1196.3px;top:915.8px;width:325.29999999999995px;height:6px;background:#35363c;border-radius:3.0px"></div>
<div style="position:absolute;left:1196.3px;top:915.8px;width:160.70000000000005px;height:6px;background:#4a80f0;border-radius:3.0px"></div>
<div style="position:absolute;left:1350.8px;top:912.6px;width:12.4px;height:12.4px;border-radius:50%;background:#fff;box-shadow:0 0 1.5px rgba(0,0,0,.6)"></div>
<div style="position:absolute;left:1536.50px;top:909.90px;height:20px;line-height:20px;font-size:13.5px;color:#fff;font-weight:normal;white-space:nowrap;-webkit-text-stroke:0.35px #fff;transform:scaleX(0.9320);transform-origin:0.00px 50%;">4.0000</div>
<div style="position:absolute;left:1153px;top:922px;width:449px;height:3px;background:#18181b"></div>
<svg style="position:absolute;left:1580px;top:902px" width="22" height="20"><line x1="2" y1="20" x2="20" y2="2" stroke="#8a8a8a" stroke-width="1.2"/><line x1="8" y1="20" x2="20" y2="8" stroke="#8a8a8a" stroke-width="1.2"/><line x1="14" y1="20" x2="20" y2="14" stroke="#8a8a8a" stroke-width="1.2"/></svg>
<div style="position:absolute;left:1593.8px;top:35px;width:6.2px;height:757px;background:#3f94c4;border-radius:3.1px"></div>
<div style="position:absolute;left:1600px;top:0px;width:1px;height:925px;background:#38383c"></div>
<div style="position:absolute;left:1601px;top:0px;width:1px;height:925px;background:#1a1a1d"></div>
</body></html>
